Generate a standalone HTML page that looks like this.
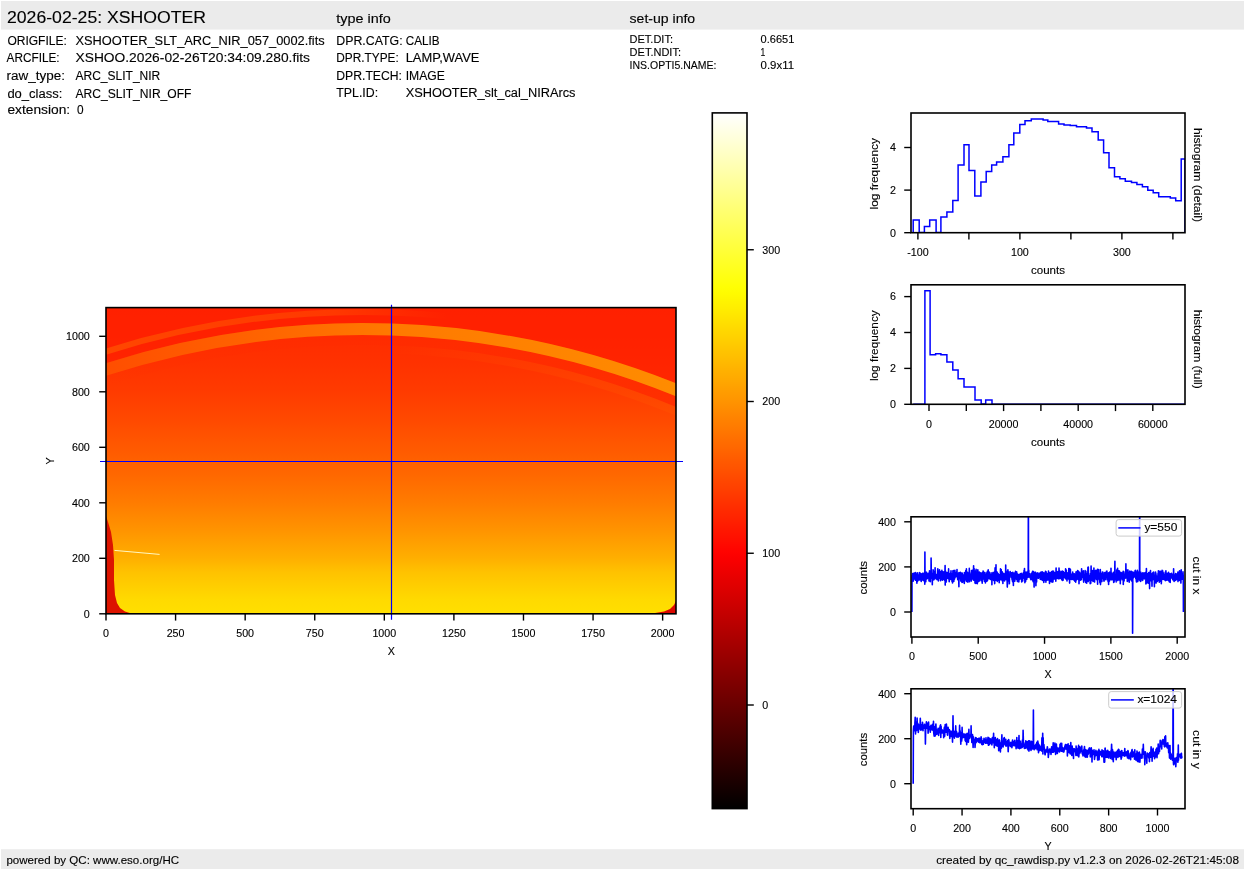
<!DOCTYPE html><html><head><meta charset="utf-8"><style>html,body{margin:0;padding:0;background:#fff;overflow:hidden}svg{display:block;will-change:transform}text{font-family:"Liberation Sans", sans-serif;stroke:#000;stroke-width:0.12px;paint-order:stroke}</style></head><body>
<svg width="1245" height="870" viewBox="0 0 1245 870">
<rect width="1245" height="870" fill="#fff"/>
<rect x="1" y="1" width="1243" height="28.6" fill="#ebebeb"/>
<rect x="1" y="849.2" width="1243" height="19.8" fill="#ebebeb"/>
<text x="7.00" y="23.10" font-size="17.2" text-anchor="start" fill="#000" textLength="199.00" lengthAdjust="spacingAndGlyphs" >2026-02-25: XSHOOTER</text>
<text x="336.30" y="22.80" font-size="12" text-anchor="start" fill="#000" textLength="54.40" lengthAdjust="spacingAndGlyphs" >type info</text>
<text x="629.60" y="22.70" font-size="12" text-anchor="start" fill="#000" textLength="65.60" lengthAdjust="spacingAndGlyphs" >set-up info</text>
<text x="7.40" y="45.00" font-size="12" text-anchor="start" fill="#000" textLength="59.40" lengthAdjust="spacingAndGlyphs" >ORIGFILE:</text>
<text x="75.50" y="45.00" font-size="12" text-anchor="start" fill="#000" textLength="249.20" lengthAdjust="spacingAndGlyphs" >XSHOOTER_SLT_ARC_NIR_057_0002.fits</text>
<text x="6.60" y="61.90" font-size="12" text-anchor="start" fill="#000" textLength="53.00" lengthAdjust="spacingAndGlyphs" >ARCFILE:</text>
<text x="75.50" y="61.90" font-size="12" text-anchor="start" fill="#000" textLength="234.50" lengthAdjust="spacingAndGlyphs" >XSHOO.2026-02-26T20:34:09.280.fits</text>
<text x="6.60" y="80.20" font-size="12" text-anchor="start" fill="#000" textLength="58.40" lengthAdjust="spacingAndGlyphs" >raw_type:</text>
<text x="75.50" y="80.20" font-size="12" text-anchor="start" fill="#000" textLength="84.80" lengthAdjust="spacingAndGlyphs" >ARC_SLIT_NIR</text>
<text x="7.40" y="97.80" font-size="12" text-anchor="start" fill="#000" textLength="54.90" lengthAdjust="spacingAndGlyphs" >do_class:</text>
<text x="75.50" y="97.80" font-size="12" text-anchor="start" fill="#000" textLength="115.90" lengthAdjust="spacingAndGlyphs" >ARC_SLIT_NIR_OFF</text>
<text x="7.40" y="113.60" font-size="12" text-anchor="start" fill="#000" textLength="62.80" lengthAdjust="spacingAndGlyphs" >extension:</text>
<text x="76.90" y="113.60" font-size="12" text-anchor="start" fill="#000" textLength="6.60" lengthAdjust="spacingAndGlyphs" >0</text>
<text x="336.30" y="45.10" font-size="12" text-anchor="start" fill="#000" textLength="66.30" lengthAdjust="spacingAndGlyphs" >DPR.CATG:</text>
<text x="405.70" y="45.10" font-size="12" text-anchor="start" fill="#000" textLength="33.80" lengthAdjust="spacingAndGlyphs" >CALIB</text>
<text x="336.30" y="61.80" font-size="12" text-anchor="start" fill="#000" textLength="62.40" lengthAdjust="spacingAndGlyphs" >DPR.TYPE:</text>
<text x="405.70" y="61.80" font-size="12" text-anchor="start" fill="#000" textLength="73.70" lengthAdjust="spacingAndGlyphs" >LAMP,WAVE</text>
<text x="336.30" y="79.80" font-size="12" text-anchor="start" fill="#000" textLength="65.70" lengthAdjust="spacingAndGlyphs" >DPR.TECH:</text>
<text x="405.70" y="79.80" font-size="12" text-anchor="start" fill="#000" textLength="39.20" lengthAdjust="spacingAndGlyphs" >IMAGE</text>
<text x="336.30" y="97.20" font-size="12" text-anchor="start" fill="#000" textLength="41.80" lengthAdjust="spacingAndGlyphs" >TPL.ID:</text>
<text x="405.70" y="97.20" font-size="12" text-anchor="start" fill="#000" textLength="169.80" lengthAdjust="spacingAndGlyphs" >XSHOOTER_slt_cal_NIRArcs</text>
<text x="629.60" y="43.10" font-size="10.6" text-anchor="start" fill="#000" textLength="43.40" lengthAdjust="spacingAndGlyphs" >DET.DIT:</text>
<text x="760.60" y="43.10" font-size="10.6" text-anchor="start" fill="#000" textLength="33.70" lengthAdjust="spacingAndGlyphs" >0.6651</text>
<text x="629.60" y="55.90" font-size="10.6" text-anchor="start" fill="#000" textLength="51.40" lengthAdjust="spacingAndGlyphs" >DET.NDIT:</text>
<text x="760.60" y="55.90" font-size="10.6" text-anchor="start" fill="#000" textLength="4.80" lengthAdjust="spacingAndGlyphs" >1</text>
<text x="629.60" y="68.80" font-size="10.6" text-anchor="start" fill="#000" textLength="86.80" lengthAdjust="spacingAndGlyphs" >INS.OPTI5.NAME:</text>
<text x="760.60" y="68.80" font-size="10.6" text-anchor="start" fill="#000" textLength="33.40" lengthAdjust="spacingAndGlyphs" >0.9x11</text>
<text x="6.40" y="864.10" font-size="11.2" text-anchor="start" fill="#000" textLength="172.70" lengthAdjust="spacingAndGlyphs" >powered by QC: www.eso.org/HC</text>
<text x="936.20" y="864.10" font-size="11.2" text-anchor="start" fill="#000" textLength="302.80" lengthAdjust="spacingAndGlyphs" >created by qc_rawdisp.py v1.2.3 on 2026-02-26T21:45:08</text>
<defs>
<linearGradient id="bg" x1="0" y1="1" x2="0" y2="0"><stop offset="0.0000" stop-color="#ffe000"/><stop offset="0.0453" stop-color="#ffda00"/><stop offset="0.0906" stop-color="#ffce00"/><stop offset="0.1359" stop-color="#ffc200"/><stop offset="0.1813" stop-color="#ffaf00"/><stop offset="0.2719" stop-color="#ff9400"/><stop offset="0.3625" stop-color="#ff7c00"/><stop offset="0.4531" stop-color="#ff6800"/><stop offset="0.5438" stop-color="#ff5900"/><stop offset="0.6344" stop-color="#ff4900"/><stop offset="0.7250" stop-color="#ff3b00"/><stop offset="0.8156" stop-color="#ff3200"/><stop offset="0.9063" stop-color="#ff2c00"/><stop offset="0.9987" stop-color="#ff2900"/></linearGradient>
<linearGradient id="cbar" x1="0" y1="1" x2="0" y2="0"><stop offset="0.00" stop-color="#000000"/><stop offset="0.01" stop-color="#070000"/><stop offset="0.02" stop-color="#0e0000"/><stop offset="0.03" stop-color="#150000"/><stop offset="0.04" stop-color="#1c0000"/><stop offset="0.05" stop-color="#230000"/><stop offset="0.06" stop-color="#2a0000"/><stop offset="0.07" stop-color="#310000"/><stop offset="0.08" stop-color="#380000"/><stop offset="0.09" stop-color="#3f0000"/><stop offset="0.10" stop-color="#460000"/><stop offset="0.11" stop-color="#4d0000"/><stop offset="0.12" stop-color="#540000"/><stop offset="0.13" stop-color="#5b0000"/><stop offset="0.14" stop-color="#620000"/><stop offset="0.15" stop-color="#690000"/><stop offset="0.16" stop-color="#700000"/><stop offset="0.17" stop-color="#770000"/><stop offset="0.18" stop-color="#7e0000"/><stop offset="0.19" stop-color="#850000"/><stop offset="0.20" stop-color="#8c0000"/><stop offset="0.21" stop-color="#930000"/><stop offset="0.22" stop-color="#9a0000"/><stop offset="0.23" stop-color="#a10000"/><stop offset="0.24" stop-color="#a80000"/><stop offset="0.25" stop-color="#af0000"/><stop offset="0.26" stop-color="#b60000"/><stop offset="0.27" stop-color="#bd0000"/><stop offset="0.28" stop-color="#c40000"/><stop offset="0.29" stop-color="#cb0000"/><stop offset="0.30" stop-color="#d20000"/><stop offset="0.31" stop-color="#d90000"/><stop offset="0.32" stop-color="#e00000"/><stop offset="0.33" stop-color="#e60000"/><stop offset="0.34" stop-color="#ed0000"/><stop offset="0.35" stop-color="#f40000"/><stop offset="0.36" stop-color="#fb0000"/><stop offset="0.37" stop-color="#ff0300"/><stop offset="0.38" stop-color="#ff0a00"/><stop offset="0.39" stop-color="#ff1100"/><stop offset="0.40" stop-color="#ff1700"/><stop offset="0.41" stop-color="#ff1e00"/><stop offset="0.42" stop-color="#ff2500"/><stop offset="0.43" stop-color="#ff2b00"/><stop offset="0.44" stop-color="#ff3200"/><stop offset="0.45" stop-color="#ff3900"/><stop offset="0.46" stop-color="#ff4000"/><stop offset="0.47" stop-color="#ff4600"/><stop offset="0.48" stop-color="#ff4d00"/><stop offset="0.49" stop-color="#ff5400"/><stop offset="0.50" stop-color="#ff5a00"/><stop offset="0.51" stop-color="#ff6100"/><stop offset="0.52" stop-color="#ff6800"/><stop offset="0.53" stop-color="#ff6e00"/><stop offset="0.54" stop-color="#ff7500"/><stop offset="0.55" stop-color="#ff7c00"/><stop offset="0.56" stop-color="#ff8200"/><stop offset="0.57" stop-color="#ff8900"/><stop offset="0.58" stop-color="#ff9000"/><stop offset="0.59" stop-color="#ff9700"/><stop offset="0.60" stop-color="#ff9d00"/><stop offset="0.61" stop-color="#ffa400"/><stop offset="0.62" stop-color="#ffab00"/><stop offset="0.63" stop-color="#ffb100"/><stop offset="0.64" stop-color="#ffb800"/><stop offset="0.65" stop-color="#ffbf00"/><stop offset="0.66" stop-color="#ffc500"/><stop offset="0.67" stop-color="#ffcc00"/><stop offset="0.68" stop-color="#ffd300"/><stop offset="0.69" stop-color="#ffd900"/><stop offset="0.70" stop-color="#ffe000"/><stop offset="0.71" stop-color="#ffe700"/><stop offset="0.72" stop-color="#ffee00"/><stop offset="0.73" stop-color="#fff400"/><stop offset="0.74" stop-color="#fffb00"/><stop offset="0.75" stop-color="#ffff04"/><stop offset="0.76" stop-color="#ffff0e"/><stop offset="0.77" stop-color="#ffff18"/><stop offset="0.78" stop-color="#ffff22"/><stop offset="0.79" stop-color="#ffff2c"/><stop offset="0.80" stop-color="#ffff36"/><stop offset="0.81" stop-color="#ffff40"/><stop offset="0.82" stop-color="#ffff4a"/><stop offset="0.83" stop-color="#ffff54"/><stop offset="0.84" stop-color="#ffff5e"/><stop offset="0.85" stop-color="#ffff68"/><stop offset="0.86" stop-color="#ffff72"/><stop offset="0.87" stop-color="#ffff7c"/><stop offset="0.88" stop-color="#ffff87"/><stop offset="0.89" stop-color="#ffff91"/><stop offset="0.90" stop-color="#ffff9b"/><stop offset="0.91" stop-color="#ffffa5"/><stop offset="0.92" stop-color="#ffffaf"/><stop offset="0.93" stop-color="#ffffb9"/><stop offset="0.94" stop-color="#ffffc3"/><stop offset="0.95" stop-color="#ffffcd"/><stop offset="0.96" stop-color="#ffffd7"/><stop offset="0.97" stop-color="#ffffe1"/><stop offset="0.98" stop-color="#ffffeb"/><stop offset="0.99" stop-color="#fffff5"/><stop offset="1.00" stop-color="#ffffff"/></linearGradient>
<clipPath id="imclip"><rect x="106.0" y="307.6" width="570.0" height="306.19999999999993"/></clipPath>
</defs>
<rect x="106.0" y="307.6" width="570.0" height="306.19999999999993" fill="url(#bg)"/>
<g clip-path="url(#imclip)">
<linearGradient id="upg" gradientUnits="userSpaceOnUse" x1="106" y1="0" x2="676" y2="0"><stop offset="0" stop-color="#ff4b00" stop-opacity="0.9"/><stop offset="0.4" stop-color="#ff4300" stop-opacity="0.7"/><stop offset="0.6" stop-color="#ff3c00" stop-opacity="0"/></linearGradient>
<linearGradient id="dkg" gradientUnits="userSpaceOnUse" x1="106" y1="0" x2="676" y2="0"><stop offset="0" stop-color="#ff1300" stop-opacity="0.8"/><stop offset="0.4" stop-color="#ff1800" stop-opacity="0.6"/><stop offset="1" stop-color="#ff1c00" stop-opacity="0.5"/></linearGradient>
<path d="M80,300 L700,300 L700,393.25 A843.5,843.5 0 0 0 80,371.89 Z" fill="#ff1900" fill-opacity="0.55"/>
<path d="M80,360.22 A854.5,854.5 0 0 1 700,381.26" fill="none" stroke="url(#upg)" stroke-width="6"/>
<linearGradient id="arcg" gradientUnits="userSpaceOnUse" x1="106" y1="0" x2="676" y2="0"><stop offset="0" stop-color="#ff4e00"/><stop offset="0.25" stop-color="#ff6200"/><stop offset="0.5" stop-color="#ff7900"/><stop offset="1" stop-color="#ff8c00"/></linearGradient>
<linearGradient id="lowg" gradientUnits="userSpaceOnUse" x1="106" y1="0" x2="676" y2="0"><stop offset="0" stop-color="#ff2b00" stop-opacity="0"/><stop offset="0.4" stop-color="#ff2b00" stop-opacity="0.5"/><stop offset="1" stop-color="#ff2800" stop-opacity="0.7"/></linearGradient>
<linearGradient id="low2g" gradientUnits="userSpaceOnUse" x1="106" y1="0" x2="676" y2="0"><stop offset="0" stop-color="#ff5900" stop-opacity="0"/><stop offset="0.5" stop-color="#ff5900" stop-opacity="0"/><stop offset="0.8" stop-color="#ff5300" stop-opacity="0.3"/><stop offset="1" stop-color="#ff5300" stop-opacity="0.4"/></linearGradient>
<path d="M80,389.96 A826.5,826.5 0 0 1 700,411.83" fill="none" stroke="url(#lowg)" stroke-width="10"/>
<path d="M80,399.55 A817.5,817.5 0 0 1 700,421.69" fill="none" stroke="url(#low2g)" stroke-width="8"/>
<path d="M80,378.37 A837.4,837.4 0 0 1 700,399.90" fill="none" stroke="url(#arcg)" stroke-width="12"/>
<path d="M106,516 L108,522 L111,532 L113,545 L114,560 L114,580 L115,595 L117,603 L120,608 L125,611.5 L133,614 L106,614 Z" fill="#dc1400"/>
<path d="M640,614 L655,613 L664,611.5 L670,609 L674,605 L676,601 L676,614 Z" fill="#dc0800"/>
<line x1="114.5" y1="550.4" x2="159.6" y2="554.4" stroke="#fff8c0" stroke-width="1"/>
</g>
<line x1="391.5" y1="304.8" x2="391.5" y2="619.8" stroke="#0000ff" stroke-width="1.2"/>
<line x1="100" y1="461.5" x2="683" y2="461.5" stroke="#0000ff" stroke-width="1.2"/>
<rect x="106.0" y="307.6" width="570.0" height="306.19999999999993" fill="none" stroke="#000" stroke-width="1.6"/>
<line x1="106.00" y1="613.8" x2="106.00" y2="620.5999999999999" stroke="#000" stroke-width="1.4"/>
<text x="106.00" y="637.20" font-size="10.7" text-anchor="middle" fill="#000" >0</text>
<line x1="175.58" y1="613.8" x2="175.58" y2="620.5999999999999" stroke="#000" stroke-width="1.4"/>
<text x="175.58" y="637.20" font-size="10.7" text-anchor="middle" fill="#000" >250</text>
<line x1="245.16" y1="613.8" x2="245.16" y2="620.5999999999999" stroke="#000" stroke-width="1.4"/>
<text x="245.16" y="637.20" font-size="10.7" text-anchor="middle" fill="#000" >500</text>
<line x1="314.74" y1="613.8" x2="314.74" y2="620.5999999999999" stroke="#000" stroke-width="1.4"/>
<text x="314.74" y="637.20" font-size="10.7" text-anchor="middle" fill="#000" >750</text>
<line x1="384.32" y1="613.8" x2="384.32" y2="620.5999999999999" stroke="#000" stroke-width="1.4"/>
<text x="384.32" y="637.20" font-size="10.7" text-anchor="middle" fill="#000" >1000</text>
<line x1="453.90" y1="613.8" x2="453.90" y2="620.5999999999999" stroke="#000" stroke-width="1.4"/>
<text x="453.90" y="637.20" font-size="10.7" text-anchor="middle" fill="#000" >1250</text>
<line x1="523.48" y1="613.8" x2="523.48" y2="620.5999999999999" stroke="#000" stroke-width="1.4"/>
<text x="523.48" y="637.20" font-size="10.7" text-anchor="middle" fill="#000" >1500</text>
<line x1="593.06" y1="613.8" x2="593.06" y2="620.5999999999999" stroke="#000" stroke-width="1.4"/>
<text x="593.06" y="637.20" font-size="10.7" text-anchor="middle" fill="#000" >1750</text>
<line x1="662.64" y1="613.8" x2="662.64" y2="620.5999999999999" stroke="#000" stroke-width="1.4"/>
<text x="662.64" y="637.20" font-size="10.7" text-anchor="middle" fill="#000" >2000</text>
<line x1="99.2" y1="613.80" x2="106.0" y2="613.80" stroke="#000" stroke-width="1.4"/>
<text x="89.80" y="617.65" font-size="10.7" text-anchor="end" fill="#000" >0</text>
<line x1="99.2" y1="558.30" x2="106.0" y2="558.30" stroke="#000" stroke-width="1.4"/>
<text x="89.80" y="562.15" font-size="10.7" text-anchor="end" fill="#000" >200</text>
<line x1="99.2" y1="502.80" x2="106.0" y2="502.80" stroke="#000" stroke-width="1.4"/>
<text x="89.80" y="506.65" font-size="10.7" text-anchor="end" fill="#000" >400</text>
<line x1="99.2" y1="447.30" x2="106.0" y2="447.30" stroke="#000" stroke-width="1.4"/>
<text x="89.80" y="451.15" font-size="10.7" text-anchor="end" fill="#000" >600</text>
<line x1="99.2" y1="391.80" x2="106.0" y2="391.80" stroke="#000" stroke-width="1.4"/>
<text x="89.80" y="395.65" font-size="10.7" text-anchor="end" fill="#000" >800</text>
<line x1="99.2" y1="336.30" x2="106.0" y2="336.30" stroke="#000" stroke-width="1.4"/>
<text x="89.80" y="340.15" font-size="10.7" text-anchor="end" fill="#000" >1000</text>
<text x="391.30" y="654.90" font-size="10.7" text-anchor="middle" fill="#000" >X</text>
<text x="53.80" y="461.00" font-size="10.7" text-anchor="middle" fill="#000" transform="rotate(-90 53.80 461.00)" >Y</text>
<rect x="712.3" y="112.9" width="34.700000000000045" height="695.7" fill="url(#cbar)"/>
<rect x="712.3" y="112.9" width="34.700000000000045" height="695.7" fill="none" stroke="#000" stroke-width="1.6"/>
<line x1="747.0" y1="705.00" x2="753.8" y2="705.00" stroke="#000" stroke-width="1.4"/>
<text x="762.30" y="708.85" font-size="10.7" text-anchor="start" fill="#000" >0</text>
<line x1="747.0" y1="553.25" x2="753.8" y2="553.25" stroke="#000" stroke-width="1.4"/>
<text x="762.30" y="557.10" font-size="10.7" text-anchor="start" fill="#000" >100</text>
<line x1="747.0" y1="401.50" x2="753.8" y2="401.50" stroke="#000" stroke-width="1.4"/>
<text x="762.30" y="405.35" font-size="10.7" text-anchor="start" fill="#000" >200</text>
<line x1="747.0" y1="249.75" x2="753.8" y2="249.75" stroke="#000" stroke-width="1.4"/>
<text x="762.30" y="253.60" font-size="10.7" text-anchor="start" fill="#000" >300</text>
<g clip-path="url(#h1clip)"><path d="M913.2,232.7 L913.2,219.9 L919.2,219.9 L919.2,232.6 L924.4,232.6 L924.4,226.6 L929.7,226.6 L929.7,219.9 L936.1,219.9 L936.1,232.6 L940.9,232.6 L940.9,216.9 L946.9,216.9 L946.9,212.1 L952.8,212.1 L952.8,200.4 L958.1,200.4 L958.1,165.0 L964.0,165.0 L964.0,144.8 L969.0,144.8 L969.0,170.5 L974.8,170.5 L974.8,195.9 L980.9,195.9 L980.9,182.0 L986.2,182.0 L986.2,171.6 L991.7,171.6 L991.7,165.0 L996.6,165.0 L996.6,162.0 L1002.9,162.0 L1002.9,156.8 L1008.9,156.8 L1008.9,144.8 L1013.8,144.8 L1013.8,132.9 L1019.8,132.9 L1019.8,124.6 L1025.0,124.6 L1025.0,120.8 L1031.3,120.8 L1031.3,119.0 L1040.0,119.0 L1040.0,119.0 L1043.1,119.0 L1043.1,120.0 L1047.8,120.0 L1047.8,121.6 L1058.6,121.6 L1058.6,123.9 L1064.0,123.9 L1064.0,124.9 L1070.2,124.9 L1070.2,125.6 L1076.5,125.6 L1076.5,126.7 L1086.5,126.7 L1086.5,128.0 L1092.0,128.0 L1092.0,131.7 L1098.2,131.7 L1098.2,139.9 L1103.6,139.9 L1103.6,152.8 L1109.0,152.8 L1109.0,167.8 L1114.5,167.8 L1114.5,176.7 L1119.9,176.7 L1119.9,178.8 L1125.3,178.8 L1125.3,181.3 L1131.5,181.3 L1131.5,182.6 L1136.9,182.6 L1136.9,184.6 L1142.4,184.6 L1142.4,186.7 L1147.8,186.7 L1147.8,190.3 L1153.2,190.3 L1153.2,192.8 L1158.7,192.8 L1158.7,196.8 L1170.3,196.8 L1170.3,198.1 L1175.7,198.1 L1175.7,200.7 L1181.2,200.7 L1181.2,159.0 L1185.0,159.0 L1185.0,232.7" fill="none" stroke="#0000ff" stroke-width="1.5" stroke-linejoin="miter"/></g>
<clipPath id="h1clip"><rect x="911.0" y="113.0" width="274.0" height="119.69999999999999"/></clipPath>
<rect x="911.0" y="113.0" width="274.0" height="119.69999999999999" fill="none" stroke="#000" stroke-width="1.6"/>
<line x1="917.90" y1="232.7" x2="917.90" y2="239.5" stroke="#000" stroke-width="1.4"/>
<text x="917.90" y="255.80" font-size="10.7" text-anchor="middle" fill="#000" >-100</text>
<line x1="968.90" y1="232.7" x2="968.90" y2="239.5" stroke="#000" stroke-width="1.4"/>
<line x1="1019.90" y1="232.7" x2="1019.90" y2="239.5" stroke="#000" stroke-width="1.4"/>
<text x="1019.90" y="255.80" font-size="10.7" text-anchor="middle" fill="#000" >100</text>
<line x1="1070.90" y1="232.7" x2="1070.90" y2="239.5" stroke="#000" stroke-width="1.4"/>
<line x1="1121.90" y1="232.7" x2="1121.90" y2="239.5" stroke="#000" stroke-width="1.4"/>
<text x="1121.90" y="255.80" font-size="10.7" text-anchor="middle" fill="#000" >300</text>
<line x1="1172.90" y1="232.7" x2="1172.90" y2="239.5" stroke="#000" stroke-width="1.4"/>
<line x1="904.2" y1="232.70" x2="911.0" y2="232.70" stroke="#000" stroke-width="1.4"/>
<text x="896.00" y="236.55" font-size="10.7" text-anchor="end" fill="#000" >0</text>
<line x1="904.2" y1="190.10" x2="911.0" y2="190.10" stroke="#000" stroke-width="1.4"/>
<text x="896.00" y="193.95" font-size="10.7" text-anchor="end" fill="#000" >2</text>
<line x1="904.2" y1="147.50" x2="911.0" y2="147.50" stroke="#000" stroke-width="1.4"/>
<text x="896.00" y="151.35" font-size="10.7" text-anchor="end" fill="#000" >4</text>
<text x="1048.00" y="274.20" font-size="10.7" text-anchor="middle" fill="#000" textLength="34.00" lengthAdjust="spacingAndGlyphs" >counts</text>
<text x="877.80" y="173.75" font-size="10.7" text-anchor="middle" fill="#000" textLength="71.50" lengthAdjust="spacingAndGlyphs" transform="rotate(-90 877.80 173.75)" >log frequency</text>
<text x="1193.80" y="175.00" font-size="10.7" text-anchor="middle" fill="#000" textLength="94.20" lengthAdjust="spacingAndGlyphs" transform="rotate(90 1193.80 175.00)" >histogram (detail)</text>
<path d="M913.2,404.3 L924.9,404.3 L924.9,290.8 L930.1,290.8 L930.1,354.7 L935.6,354.7 L935.6,353.7 L940.9,353.7 L940.9,354.7 L946.9,354.7 L946.9,361.9 L952.8,361.9 L952.8,370.0 L958.1,370.0 L958.1,378.7 L964.0,378.7 L964.0,386.9 L975.0,386.9 L975.0,399.9 L981.2,399.9 L981.2,404.1 L985.7,404.1 L985.7,399.9 L992.0,399.9 L992.0,404.3 L1184.7,404.3" fill="none" stroke="#0000ff" stroke-width="1.5"/>
<rect x="911.0" y="284.8" width="274.0" height="119.5" fill="none" stroke="#000" stroke-width="1.6"/>
<line x1="929.00" y1="404.3" x2="929.00" y2="411.1" stroke="#000" stroke-width="1.4"/>
<text x="929.00" y="427.50" font-size="10.7" text-anchor="middle" fill="#000" >0</text>
<line x1="966.30" y1="404.3" x2="966.30" y2="411.1" stroke="#000" stroke-width="1.4"/>
<line x1="1003.60" y1="404.3" x2="1003.60" y2="411.1" stroke="#000" stroke-width="1.4"/>
<text x="1003.60" y="427.50" font-size="10.7" text-anchor="middle" fill="#000" >20000</text>
<line x1="1040.90" y1="404.3" x2="1040.90" y2="411.1" stroke="#000" stroke-width="1.4"/>
<line x1="1078.20" y1="404.3" x2="1078.20" y2="411.1" stroke="#000" stroke-width="1.4"/>
<text x="1078.20" y="427.50" font-size="10.7" text-anchor="middle" fill="#000" >40000</text>
<line x1="1115.50" y1="404.3" x2="1115.50" y2="411.1" stroke="#000" stroke-width="1.4"/>
<line x1="1152.80" y1="404.3" x2="1152.80" y2="411.1" stroke="#000" stroke-width="1.4"/>
<text x="1152.80" y="427.50" font-size="10.7" text-anchor="middle" fill="#000" >60000</text>
<line x1="904.2" y1="404.30" x2="911.0" y2="404.30" stroke="#000" stroke-width="1.4"/>
<text x="896.00" y="408.15" font-size="10.7" text-anchor="end" fill="#000" >0</text>
<line x1="904.2" y1="368.40" x2="911.0" y2="368.40" stroke="#000" stroke-width="1.4"/>
<text x="896.00" y="372.25" font-size="10.7" text-anchor="end" fill="#000" >2</text>
<line x1="904.2" y1="332.50" x2="911.0" y2="332.50" stroke="#000" stroke-width="1.4"/>
<text x="896.00" y="336.35" font-size="10.7" text-anchor="end" fill="#000" >4</text>
<line x1="904.2" y1="296.60" x2="911.0" y2="296.60" stroke="#000" stroke-width="1.4"/>
<text x="896.00" y="300.45" font-size="10.7" text-anchor="end" fill="#000" >6</text>
<text x="1048.00" y="446.00" font-size="10.7" text-anchor="middle" fill="#000" textLength="34.00" lengthAdjust="spacingAndGlyphs" >counts</text>
<text x="877.80" y="345.70" font-size="10.7" text-anchor="middle" fill="#000" textLength="70.80" lengthAdjust="spacingAndGlyphs" transform="rotate(-90 877.80 345.70)" >log frequency</text>
<text x="1193.80" y="349.20" font-size="10.7" text-anchor="middle" fill="#000" textLength="79.10" lengthAdjust="spacingAndGlyphs" transform="rotate(90 1193.80 349.20)" >histogram (full)</text>
<clipPath id="c1clip"><rect x="911.0" y="516.8" width="274.0" height="120.20000000000005"/></clipPath>
<g clip-path="url(#c1clip)"><path d="M911.9,612.0 L912.0,577.1 L912.2,575.0 L912.3,578.9 L912.4,576.9 L912.6,573.6 L912.7,575.7 L912.8,580.9 L913.0,574.1 L913.1,580.9 L913.2,581.1 L913.4,575.5 L913.5,576.5 L913.6,575.5 L913.8,575.3 L913.9,574.9 L914.0,573.1 L914.2,577.3 L914.3,576.7 L914.4,577.6 L914.6,579.0 L914.7,578.6 L914.8,575.7 L915.0,576.2 L915.1,572.8 L915.2,576.7 L915.3,578.6 L915.5,580.3 L915.6,574.1 L915.7,572.5 L915.9,575.4 L916.0,574.7 L916.1,578.0 L916.3,579.0 L916.4,577.8 L916.5,580.3 L916.7,575.7 L916.8,581.5 L916.9,583.2 L917.1,574.7 L917.2,573.7 L917.3,578.3 L917.5,576.3 L917.6,581.2 L917.7,572.8 L917.9,578.2 L918.0,575.1 L918.1,580.4 L918.3,577.7 L918.4,577.8 L918.5,575.0 L918.7,576.6 L918.8,576.7 L918.9,576.7 L919.1,574.9 L919.2,577.0 L919.3,575.1 L919.5,578.9 L919.6,580.0 L919.7,572.5 L919.9,577.6 L920.0,578.8 L920.1,574.5 L920.3,573.5 L920.4,576.7 L920.5,573.6 L920.7,574.3 L920.8,577.2 L920.9,577.0 L921.1,580.9 L921.2,581.4 L921.3,574.0 L921.5,574.3 L921.6,576.9 L921.7,575.0 L921.8,580.5 L922.0,575.8 L922.1,573.9 L922.2,577.1 L922.4,576.3 L922.5,578.6 L922.6,574.5 L922.8,579.1 L922.9,575.8 L923.0,573.0 L923.2,580.0 L923.3,579.5 L923.4,576.2 L923.6,573.6 L923.7,580.8 L923.8,576.2 L924.0,578.1 L924.1,576.1 L924.2,574.8 L924.4,580.4 L924.5,575.3 L924.6,575.8 L924.8,584.2 L924.9,552.0 L925.0,572.9 L925.2,574.4 L925.3,576.4 L925.4,579.5 L925.6,578.8 L925.7,572.1 L925.8,581.7 L926.0,572.6 L926.1,575.3 L926.2,575.3 L926.4,573.3 L926.5,572.3 L926.6,578.4 L926.8,579.0 L926.9,573.7 L927.0,577.5 L927.2,575.9 L927.3,574.4 L927.4,578.2 L927.6,577.5 L927.7,574.2 L927.8,577.7 L928.0,574.0 L928.1,578.0 L928.2,573.2 L928.3,577.0 L928.5,576.1 L928.6,577.9 L928.7,575.7 L928.9,575.7 L929.0,581.0 L929.1,575.9 L929.3,576.1 L929.4,575.6 L929.5,570.7 L929.7,575.4 L929.8,572.7 L929.9,577.0 L930.1,581.3 L930.2,576.6 L930.3,581.8 L930.5,577.2 L930.6,574.9 L930.7,577.5 L930.9,578.2 L931.0,574.9 L931.1,558.1 L931.3,574.1 L931.4,572.8 L931.5,577.8 L931.7,574.4 L931.8,574.1 L931.9,575.2 L932.1,577.4 L932.2,578.7 L932.3,584.7 L932.5,577.1 L932.6,575.4 L932.7,580.4 L932.9,575.3 L933.0,578.3 L933.1,569.8 L933.3,575.6 L933.4,570.9 L933.5,574.9 L933.7,577.3 L933.8,574.0 L933.9,579.7 L934.1,579.5 L934.2,577.1 L934.3,577.3 L934.5,571.6 L934.6,576.4 L934.7,575.9 L934.8,577.9 L935.0,577.6 L935.1,567.7 L935.2,575.7 L935.4,577.0 L935.5,576.9 L935.6,574.3 L935.8,576.8 L935.9,578.7 L936.0,578.8 L936.2,577.4 L936.3,578.3 L936.4,575.9 L936.6,576.3 L936.7,578.4 L936.8,576.6 L937.0,578.7 L937.1,579.6 L937.2,574.1 L937.4,576.8 L937.5,574.6 L937.6,571.1 L937.8,568.7 L937.9,571.8 L938.0,572.6 L938.2,575.0 L938.3,572.8 L938.4,581.0 L938.6,578.4 L938.7,575.7 L938.8,578.3 L939.0,577.0 L939.1,576.4 L939.2,576.3 L939.4,578.2 L939.5,569.9 L939.6,574.1 L939.8,573.5 L939.9,577.2 L940.0,577.2 L940.2,573.2 L940.3,571.6 L940.4,576.0 L940.6,580.7 L940.7,577.5 L940.8,577.4 L941.0,579.2 L941.1,576.6 L941.2,572.6 L941.3,578.8 L941.5,572.3 L941.6,576.0 L941.7,572.6 L941.9,570.4 L942.0,578.5 L942.1,579.6 L942.3,571.5 L942.4,576.3 L942.5,580.2 L942.7,577.2 L942.8,576.4 L942.9,575.3 L943.1,575.1 L943.2,572.1 L943.3,578.7 L943.5,574.3 L943.6,579.3 L943.7,579.0 L943.9,576.5 L944.0,571.9 L944.1,575.4 L944.3,576.3 L944.4,577.8 L944.5,580.2 L944.7,579.3 L944.8,575.7 L944.9,574.0 L945.1,565.6 L945.2,585.1 L945.3,576.7 L945.5,571.0 L945.6,579.5 L945.7,576.4 L945.9,578.5 L946.0,577.9 L946.1,578.0 L946.3,581.9 L946.4,576.3 L946.5,572.5 L946.7,577.6 L946.8,578.6 L946.9,575.0 L947.1,577.5 L947.2,574.2 L947.3,576.2 L947.5,576.0 L947.6,573.9 L947.7,575.3 L947.8,572.3 L948.0,578.4 L948.1,572.6 L948.2,575.1 L948.4,573.5 L948.5,576.9 L948.6,568.9 L948.8,579.2 L948.9,575.4 L949.0,577.7 L949.2,581.8 L949.3,578.1 L949.4,576.8 L949.6,574.3 L949.7,578.0 L949.8,575.3 L950.0,573.5 L950.1,573.7 L950.2,575.1 L950.4,579.5 L950.5,576.2 L950.6,579.2 L950.8,574.8 L950.9,573.3 L951.0,570.9 L951.2,578.1 L951.3,575.8 L951.4,574.3 L951.6,578.7 L951.7,577.5 L951.8,575.1 L952.0,581.5 L952.1,579.3 L952.2,573.8 L952.4,573.6 L952.5,582.9 L952.6,576.0 L952.8,581.2 L952.9,570.8 L953.0,573.6 L953.2,579.3 L953.3,575.8 L953.4,572.2 L953.6,570.5 L953.7,578.0 L953.8,581.4 L954.0,576.3 L954.1,576.5 L954.2,572.2 L954.3,575.4 L954.5,579.2 L954.6,576.9 L954.7,578.4 L954.9,570.2 L955.0,576.3 L955.1,576.5 L955.3,576.8 L955.4,574.0 L955.5,573.6 L955.7,576.9 L955.8,573.2 L955.9,575.9 L956.1,576.6 L956.2,572.4 L956.3,574.0 L956.5,575.8 L956.6,574.8 L956.7,571.8 L956.9,574.4 L957.0,569.5 L957.1,576.1 L957.3,574.5 L957.4,573.3 L957.5,577.3 L957.7,579.8 L957.8,574.4 L957.9,577.8 L958.1,575.2 L958.2,575.5 L958.3,576.1 L958.5,573.1 L958.6,579.3 L958.7,577.2 L958.9,586.7 L959.0,572.5 L959.1,575.6 L959.3,573.5 L959.4,574.9 L959.5,573.8 L959.7,578.7 L959.8,576.1 L959.9,578.7 L960.1,576.9 L960.2,578.1 L960.3,578.3 L960.4,572.4 L960.6,576.3 L960.7,572.6 L960.8,581.1 L961.0,575.3 L961.1,573.0 L961.2,575.0 L961.4,575.6 L961.5,576.6 L961.6,574.4 L961.8,577.4 L961.9,574.1 L962.0,582.5 L962.2,573.0 L962.3,573.7 L962.4,574.9 L962.6,582.2 L962.7,576.7 L962.8,576.4 L963.0,576.9 L963.1,577.8 L963.2,581.0 L963.4,575.2 L963.5,577.6 L963.6,575.4 L963.8,579.7 L963.9,576.0 L964.0,575.5 L964.2,575.7 L964.3,583.5 L964.4,572.5 L964.6,574.4 L964.7,574.1 L964.8,580.9 L965.0,577.5 L965.1,577.0 L965.2,574.3 L965.4,576.6 L965.5,573.5 L965.6,577.5 L965.8,570.6 L965.9,576.4 L966.0,574.3 L966.2,579.1 L966.3,574.6 L966.4,568.9 L966.6,581.4 L966.7,580.5 L966.8,579.4 L966.9,578.1 L967.1,576.5 L967.2,576.5 L967.3,576.6 L967.5,576.8 L967.6,572.2 L967.7,577.0 L967.9,582.3 L968.0,578.6 L968.1,575.0 L968.3,573.3 L968.4,575.7 L968.5,575.2 L968.7,580.2 L968.8,577.9 L968.9,578.6 L969.1,577.8 L969.2,578.8 L969.3,568.4 L969.5,578.2 L969.6,581.7 L969.7,572.7 L969.9,575.5 L970.0,575.6 L970.1,576.2 L970.3,577.8 L970.4,575.4 L970.5,578.9 L970.7,576.5 L970.8,578.0 L970.9,575.9 L971.1,575.5 L971.2,575.1 L971.3,581.1 L971.5,570.6 L971.6,574.8 L971.7,577.1 L971.9,577.2 L972.0,573.4 L972.1,578.8 L972.3,577.7 L972.4,577.6 L972.5,570.2 L972.7,574.7 L972.8,572.1 L972.9,570.6 L973.1,572.5 L973.2,579.8 L973.3,577.6 L973.4,574.0 L973.6,565.8 L973.7,580.2 L973.8,578.4 L974.0,574.7 L974.1,568.5 L974.2,576.2 L974.4,580.0 L974.5,579.8 L974.6,577.2 L974.8,575.8 L974.9,575.3 L975.0,583.1 L975.2,576.9 L975.3,581.0 L975.4,579.0 L975.6,576.4 L975.7,570.8 L975.8,583.4 L976.0,573.7 L976.1,569.2 L976.2,575.0 L976.4,577.2 L976.5,574.1 L976.6,575.4 L976.8,574.6 L976.9,577.7 L977.0,582.5 L977.2,576.5 L977.3,583.7 L977.4,576.5 L977.6,576.8 L977.7,574.0 L977.8,569.7 L978.0,571.8 L978.1,580.5 L978.2,576.9 L978.4,581.6 L978.5,577.6 L978.6,578.2 L978.8,574.5 L978.9,574.7 L979.0,575.4 L979.2,577.3 L979.3,573.2 L979.4,572.1 L979.6,580.9 L979.7,576.4 L979.8,578.3 L979.9,574.4 L980.1,575.1 L980.2,576.2 L980.3,576.3 L980.5,577.6 L980.6,574.9 L980.7,575.3 L980.9,572.7 L981.0,574.5 L981.1,577.2 L981.3,579.9 L981.4,580.6 L981.5,576.4 L981.7,576.0 L981.8,578.7 L981.9,573.2 L982.1,576.6 L982.2,583.3 L982.3,576.3 L982.5,579.4 L982.6,575.2 L982.7,572.9 L982.9,575.7 L983.0,577.9 L983.1,571.0 L983.3,574.7 L983.4,571.2 L983.5,576.2 L983.7,576.5 L983.8,579.3 L983.9,576.3 L984.1,575.6 L984.2,578.1 L984.3,581.3 L984.5,579.1 L984.6,577.3 L984.7,576.7 L984.9,572.5 L985.0,576.0 L985.1,576.7 L985.3,576.6 L985.4,582.9 L985.5,574.6 L985.7,578.0 L985.8,579.2 L985.9,579.4 L986.1,581.5 L986.2,575.4 L986.3,580.4 L986.4,574.7 L986.6,575.5 L986.7,572.7 L986.8,576.0 L987.0,575.9 L987.1,581.1 L987.2,575.1 L987.4,571.2 L987.5,576.1 L987.6,580.3 L987.8,577.2 L987.9,577.0 L988.0,579.0 L988.2,569.9 L988.3,575.0 L988.4,572.5 L988.6,574.0 L988.7,573.1 L988.8,572.8 L989.0,577.5 L989.1,574.6 L989.2,572.0 L989.4,575.0 L989.5,578.8 L989.6,578.2 L989.8,576.2 L989.9,577.0 L990.0,577.2 L990.2,576.2 L990.3,574.7 L990.4,579.5 L990.6,578.6 L990.7,576.7 L990.8,577.1 L991.0,575.4 L991.1,572.8 L991.2,577.1 L991.4,577.8 L991.5,577.1 L991.6,576.2 L991.8,574.8 L991.9,584.7 L992.0,575.9 L992.2,576.9 L992.3,575.3 L992.4,576.5 L992.6,579.2 L992.7,577.3 L992.8,573.7 L992.9,572.6 L993.1,576.8 L993.2,579.8 L993.3,573.3 L993.5,574.4 L993.6,578.6 L993.7,580.4 L993.9,575.4 L994.0,578.3 L994.1,573.0 L994.3,576.9 L994.4,571.9 L994.5,577.6 L994.7,583.6 L994.8,577.5 L994.9,574.8 L995.1,567.9 L995.2,578.8 L995.3,575.9 L995.5,574.9 L995.6,577.0 L995.7,574.3 L995.9,577.5 L996.0,564.8 L996.1,580.2 L996.3,576.4 L996.4,578.6 L996.5,578.0 L996.7,579.6 L996.8,574.9 L996.9,575.8 L997.1,572.1 L997.2,578.0 L997.3,581.4 L997.5,578.6 L997.6,575.7 L997.7,580.5 L997.9,574.1 L998.0,576.4 L998.1,573.5 L998.3,579.8 L998.4,574.2 L998.5,579.0 L998.7,580.2 L998.8,575.6 L998.9,576.5 L999.1,575.1 L999.2,582.7 L999.3,579.4 L999.4,577.9 L999.6,579.6 L999.7,580.3 L999.8,574.6 L1000.0,577.0 L1000.1,576.3 L1000.2,577.7 L1000.4,574.3 L1000.5,568.7 L1000.6,579.2 L1000.8,579.3 L1000.9,577.3 L1001.0,573.8 L1001.2,569.5 L1001.3,576.6 L1001.4,575.4 L1001.6,576.8 L1001.7,579.1 L1001.8,579.7 L1002.0,578.9 L1002.1,580.8 L1002.2,571.8 L1002.4,576.5 L1002.5,581.0 L1002.6,575.5 L1002.8,579.3 L1002.9,583.5 L1003.0,574.7 L1003.2,580.9 L1003.3,577.7 L1003.4,573.6 L1003.6,575.1 L1003.7,577.3 L1003.8,573.4 L1004.0,574.6 L1004.1,578.8 L1004.2,576.8 L1004.4,576.1 L1004.5,575.4 L1004.6,581.0 L1004.8,578.9 L1004.9,576.0 L1005.0,578.2 L1005.2,579.6 L1005.3,579.0 L1005.4,573.6 L1005.6,578.3 L1005.7,565.1 L1005.8,576.3 L1005.9,577.0 L1006.1,577.6 L1006.2,574.9 L1006.3,579.1 L1006.5,572.9 L1006.6,578.7 L1006.7,579.9 L1006.9,579.0 L1007.0,577.4 L1007.1,579.4 L1007.3,587.1 L1007.4,571.0 L1007.5,584.9 L1007.7,573.4 L1007.8,580.1 L1007.9,569.7 L1008.1,575.8 L1008.2,576.8 L1008.3,579.2 L1008.5,571.8 L1008.6,581.0 L1008.7,577.1 L1008.9,579.4 L1009.0,574.8 L1009.1,575.1 L1009.3,578.8 L1009.4,583.7 L1009.5,576.7 L1009.7,577.5 L1009.8,574.3 L1009.9,574.0 L1010.1,576.1 L1010.2,571.6 L1010.3,574.9 L1010.5,573.4 L1010.6,575.2 L1010.7,573.9 L1010.9,573.1 L1011.0,575.7 L1011.1,576.0 L1011.3,574.5 L1011.4,572.8 L1011.5,577.7 L1011.7,572.7 L1011.8,576.5 L1011.9,574.1 L1012.1,579.9 L1012.2,574.7 L1012.3,577.1 L1012.4,576.7 L1012.6,581.8 L1012.7,573.5 L1012.8,572.4 L1013.0,576.5 L1013.1,577.4 L1013.2,576.7 L1013.4,585.5 L1013.5,578.4 L1013.6,576.1 L1013.8,575.0 L1013.9,579.1 L1014.0,577.6 L1014.2,579.4 L1014.3,573.0 L1014.4,576.2 L1014.6,578.6 L1014.7,579.1 L1014.8,581.3 L1015.0,575.4 L1015.1,576.2 L1015.2,578.3 L1015.4,578.2 L1015.5,571.4 L1015.6,577.7 L1015.8,572.2 L1015.9,577.8 L1016.0,575.1 L1016.2,576.7 L1016.3,575.4 L1016.4,579.3 L1016.6,577.0 L1016.7,571.9 L1016.8,579.2 L1017.0,579.1 L1017.1,579.1 L1017.2,579.6 L1017.4,581.5 L1017.5,573.9 L1017.6,581.0 L1017.8,579.8 L1017.9,574.3 L1018.0,576.3 L1018.2,580.6 L1018.3,581.5 L1018.4,578.3 L1018.6,577.3 L1018.7,578.8 L1018.8,581.9 L1018.9,580.9 L1019.1,578.0 L1019.2,574.6 L1019.3,577.2 L1019.5,578.2 L1019.6,576.0 L1019.7,575.6 L1019.9,579.3 L1020.0,576.1 L1020.1,578.3 L1020.3,573.9 L1020.4,578.5 L1020.5,575.7 L1020.7,574.7 L1020.8,578.6 L1020.9,573.7 L1021.1,575.9 L1021.2,575.7 L1021.3,573.4 L1021.5,574.0 L1021.6,578.4 L1021.7,582.0 L1021.9,574.0 L1022.0,578.9 L1022.1,574.4 L1022.3,577.4 L1022.4,579.5 L1022.5,578.4 L1022.7,581.0 L1022.8,574.5 L1022.9,574.3 L1023.1,578.5 L1023.2,573.0 L1023.3,574.9 L1023.5,574.4 L1023.6,576.9 L1023.7,572.5 L1023.9,577.5 L1024.0,572.6 L1024.1,570.4 L1024.3,574.4 L1024.4,575.9 L1024.5,568.5 L1024.7,579.3 L1024.8,576.2 L1024.9,582.8 L1025.1,580.2 L1025.2,578.8 L1025.3,576.4 L1025.4,575.0 L1025.6,576.3 L1025.7,581.3 L1025.8,573.5 L1026.0,572.1 L1026.1,579.5 L1026.2,573.2 L1026.4,579.1 L1026.5,577.6 L1026.6,575.0 L1026.8,579.1 L1026.9,576.2 L1027.0,575.5 L1027.2,573.0 L1027.3,572.1 L1027.4,575.2 L1027.6,574.6 L1027.7,574.8 L1027.8,573.6 L1028.0,570.7 L1028.1,571.4 L1028.2,577.3 L1028.4,476.7 L1028.5,576.5 L1028.6,574.6 L1028.8,570.2 L1028.9,576.4 L1029.0,575.6 L1029.2,576.9 L1029.3,575.9 L1029.4,576.4 L1029.6,576.3 L1029.7,576.2 L1029.8,575.2 L1030.0,573.7 L1030.1,577.7 L1030.2,577.0 L1030.4,576.8 L1030.5,578.1 L1030.6,578.8 L1030.8,578.4 L1030.9,579.6 L1031.0,579.1 L1031.2,576.1 L1031.3,575.4 L1031.4,576.5 L1031.6,577.3 L1031.7,573.4 L1031.8,577.0 L1031.9,577.4 L1032.1,578.1 L1032.2,572.3 L1032.3,575.4 L1032.5,580.3 L1032.6,571.4 L1032.7,577.6 L1032.9,574.8 L1033.0,575.4 L1033.1,581.7 L1033.3,576.7 L1033.4,575.1 L1033.5,571.5 L1033.7,575.6 L1033.8,573.2 L1033.9,574.4 L1034.1,587.1 L1034.2,578.7 L1034.3,578.3 L1034.5,578.7 L1034.6,577.1 L1034.7,575.4 L1034.9,579.9 L1035.0,575.6 L1035.1,572.3 L1035.3,572.5 L1035.4,575.8 L1035.5,572.4 L1035.7,575.9 L1035.8,576.5 L1035.9,585.7 L1036.1,578.5 L1036.2,576.2 L1036.3,573.9 L1036.5,574.4 L1036.6,582.0 L1036.7,573.3 L1036.9,575.3 L1037.0,576.4 L1037.1,573.5 L1037.3,577.4 L1037.4,576.6 L1037.5,574.9 L1037.7,576.2 L1037.8,572.8 L1037.9,577.9 L1038.1,575.8 L1038.2,576.8 L1038.3,577.3 L1038.4,578.3 L1038.6,577.9 L1038.7,577.8 L1038.8,574.2 L1039.0,577.0 L1039.1,573.7 L1039.2,573.9 L1039.4,576.7 L1039.5,573.4 L1039.6,575.3 L1039.8,575.4 L1039.9,576.9 L1040.0,574.4 L1040.2,574.4 L1040.3,579.5 L1040.4,575.1 L1040.6,572.3 L1040.7,578.7 L1040.8,578.4 L1041.0,575.8 L1041.1,573.2 L1041.2,573.9 L1041.4,576.2 L1041.5,579.3 L1041.6,577.5 L1041.8,577.7 L1041.9,571.9 L1042.0,574.4 L1042.2,578.5 L1042.3,580.5 L1042.4,574.7 L1042.6,572.1 L1042.7,577.5 L1042.8,578.8 L1043.0,573.1 L1043.1,575.0 L1043.2,579.3 L1043.4,576.2 L1043.5,579.4 L1043.6,575.2 L1043.8,582.4 L1043.9,572.9 L1044.0,577.2 L1044.2,573.8 L1044.3,579.0 L1044.4,580.6 L1044.5,575.2 L1044.7,578.9 L1044.8,577.3 L1044.9,574.5 L1045.1,579.0 L1045.2,576.9 L1045.3,574.9 L1045.5,571.2 L1045.6,573.2 L1045.7,572.8 L1045.9,582.2 L1046.0,571.5 L1046.1,576.6 L1046.3,577.8 L1046.4,572.9 L1046.5,576.8 L1046.7,574.1 L1046.8,575.4 L1046.9,576.3 L1047.1,580.3 L1047.2,576.4 L1047.3,575.3 L1047.5,573.8 L1047.6,573.5 L1047.7,578.5 L1047.9,574.2 L1048.0,575.0 L1048.1,577.0 L1048.3,574.8 L1048.4,579.9 L1048.5,571.1 L1048.7,578.6 L1048.8,578.8 L1048.9,574.2 L1049.1,578.1 L1049.2,573.6 L1049.3,574.2 L1049.5,583.4 L1049.6,576.7 L1049.7,581.3 L1049.9,576.1 L1050.0,576.8 L1050.1,572.5 L1050.3,578.9 L1050.4,577.6 L1050.5,576.3 L1050.7,577.7 L1050.8,581.4 L1050.9,577.1 L1051.0,576.0 L1051.2,576.2 L1051.3,576.9 L1051.4,578.8 L1051.6,571.6 L1051.7,572.9 L1051.8,578.9 L1052.0,575.5 L1052.1,582.3 L1052.2,579.8 L1052.4,576.4 L1052.5,575.6 L1052.6,578.7 L1052.8,571.1 L1052.9,581.9 L1053.0,580.5 L1053.2,576.3 L1053.3,573.7 L1053.4,578.4 L1053.6,571.2 L1053.7,576.3 L1053.8,574.7 L1054.0,574.2 L1054.1,576.8 L1054.2,579.0 L1054.4,576.9 L1054.5,572.8 L1054.6,572.8 L1054.8,575.6 L1054.9,579.0 L1055.0,574.0 L1055.2,572.9 L1055.3,575.7 L1055.4,577.6 L1055.6,575.8 L1055.7,577.9 L1055.8,581.3 L1056.0,571.6 L1056.1,568.0 L1056.2,576.4 L1056.4,576.9 L1056.5,578.4 L1056.6,577.7 L1056.8,574.9 L1056.9,575.4 L1057.0,577.4 L1057.2,577.0 L1057.3,571.8 L1057.4,578.5 L1057.5,577.3 L1057.7,574.0 L1057.8,571.6 L1057.9,573.7 L1058.1,574.2 L1058.2,576.7 L1058.3,575.4 L1058.5,573.4 L1058.6,573.3 L1058.7,572.4 L1058.9,578.9 L1059.0,568.1 L1059.1,570.4 L1059.3,574.9 L1059.4,578.4 L1059.5,571.9 L1059.7,572.4 L1059.8,575.6 L1059.9,576.2 L1060.1,571.4 L1060.2,573.9 L1060.3,578.2 L1060.5,577.1 L1060.6,572.8 L1060.7,578.2 L1060.9,572.9 L1061.0,573.4 L1061.1,573.8 L1061.3,578.9 L1061.4,576.7 L1061.5,577.0 L1061.7,579.8 L1061.8,571.4 L1061.9,572.6 L1062.1,576.4 L1062.2,580.2 L1062.3,571.0 L1062.5,580.5 L1062.6,576.5 L1062.7,580.4 L1062.9,576.6 L1063.0,573.7 L1063.1,580.2 L1063.3,571.5 L1063.4,577.9 L1063.5,573.9 L1063.7,572.3 L1063.8,574.8 L1063.9,576.7 L1064.0,577.3 L1064.2,577.5 L1064.3,576.7 L1064.4,575.9 L1064.6,576.8 L1064.7,577.7 L1064.8,576.2 L1065.0,572.6 L1065.1,572.6 L1065.2,577.8 L1065.4,574.9 L1065.5,578.7 L1065.6,568.7 L1065.8,576.1 L1065.9,578.9 L1066.0,569.9 L1066.2,578.4 L1066.3,570.1 L1066.4,576.4 L1066.6,577.5 L1066.7,577.6 L1066.8,576.9 L1067.0,581.0 L1067.1,573.2 L1067.2,572.8 L1067.4,577.9 L1067.5,576.0 L1067.6,575.9 L1067.8,576.9 L1067.9,574.7 L1068.0,574.9 L1068.2,577.1 L1068.3,576.5 L1068.4,578.8 L1068.6,577.5 L1068.7,574.0 L1068.8,568.5 L1069.0,578.1 L1069.1,579.6 L1069.2,576.3 L1069.4,577.3 L1069.5,576.9 L1069.6,583.1 L1069.8,568.6 L1069.9,571.9 L1070.0,573.8 L1070.2,572.4 L1070.3,574.9 L1070.4,569.6 L1070.5,576.0 L1070.7,576.6 L1070.8,576.2 L1070.9,579.1 L1071.1,577.6 L1071.2,579.4 L1071.3,574.9 L1071.5,579.4 L1071.6,574.2 L1071.7,576.8 L1071.9,578.8 L1072.0,578.7 L1072.1,575.1 L1072.3,574.2 L1072.4,578.9 L1072.5,575.6 L1072.7,572.0 L1072.8,579.4 L1072.9,578.0 L1073.1,576.2 L1073.2,573.5 L1073.3,574.6 L1073.5,576.7 L1073.6,574.3 L1073.7,579.7 L1073.9,576.9 L1074.0,578.2 L1074.1,577.8 L1074.3,580.5 L1074.4,573.9 L1074.5,579.7 L1074.7,579.6 L1074.8,576.4 L1074.9,581.2 L1075.1,581.3 L1075.2,577.7 L1075.3,579.5 L1075.5,577.6 L1075.6,576.2 L1075.7,582.2 L1075.9,575.9 L1076.0,572.5 L1076.1,571.9 L1076.3,576.0 L1076.4,575.1 L1076.5,579.9 L1076.7,572.5 L1076.8,574.3 L1076.9,576.2 L1077.0,578.9 L1077.2,576.8 L1077.3,577.9 L1077.4,574.4 L1077.6,570.6 L1077.7,575.1 L1077.8,576.6 L1078.0,576.9 L1078.1,575.6 L1078.2,579.4 L1078.4,572.7 L1078.5,571.3 L1078.6,574.5 L1078.8,579.5 L1078.9,576.2 L1079.0,583.8 L1079.2,577.1 L1079.3,576.3 L1079.4,579.2 L1079.6,579.0 L1079.7,572.3 L1079.8,577.2 L1080.0,573.2 L1080.1,577.2 L1080.2,576.9 L1080.4,575.0 L1080.5,574.5 L1080.6,580.3 L1080.8,574.2 L1080.9,577.3 L1081.0,576.1 L1081.2,574.3 L1081.3,579.3 L1081.4,579.6 L1081.6,568.7 L1081.7,573.1 L1081.8,577.6 L1082.0,577.1 L1082.1,575.4 L1082.2,577.1 L1082.4,577.5 L1082.5,576.9 L1082.6,576.0 L1082.8,571.6 L1082.9,574.0 L1083.0,576.9 L1083.2,576.2 L1083.3,570.9 L1083.4,577.5 L1083.5,580.2 L1083.7,582.1 L1083.8,576.5 L1083.9,575.3 L1084.1,574.9 L1084.2,578.6 L1084.3,574.8 L1084.5,577.7 L1084.6,577.2 L1084.7,579.9 L1084.9,578.1 L1085.0,574.1 L1085.1,570.6 L1085.3,578.2 L1085.4,574.0 L1085.5,577.5 L1085.7,582.4 L1085.8,573.8 L1085.9,571.2 L1086.1,582.7 L1086.2,577.8 L1086.3,580.7 L1086.5,579.6 L1086.6,577.1 L1086.7,583.3 L1086.9,574.4 L1087.0,581.5 L1087.1,575.1 L1087.3,573.3 L1087.4,574.7 L1087.5,577.2 L1087.7,578.0 L1087.8,578.6 L1087.9,567.4 L1088.1,575.4 L1088.2,581.6 L1088.3,567.0 L1088.5,575.5 L1088.6,576.4 L1088.7,576.9 L1088.9,575.3 L1089.0,576.2 L1089.1,577.5 L1089.3,579.9 L1089.4,577.2 L1089.5,578.3 L1089.7,577.8 L1089.8,577.5 L1089.9,580.8 L1090.0,575.3 L1090.2,583.7 L1090.3,582.7 L1090.4,573.5 L1090.6,573.7 L1090.7,583.3 L1090.8,582.5 L1091.0,572.0 L1091.1,566.0 L1091.2,574.0 L1091.4,576.6 L1091.5,572.7 L1091.6,572.7 L1091.8,580.2 L1091.9,578.9 L1092.0,572.9 L1092.2,575.0 L1092.3,570.6 L1092.4,578.9 L1092.6,571.7 L1092.7,580.8 L1092.8,573.2 L1093.0,581.5 L1093.1,573.1 L1093.2,576.0 L1093.4,574.3 L1093.5,576.2 L1093.6,574.6 L1093.8,579.0 L1093.9,568.1 L1094.0,573.4 L1094.2,571.9 L1094.3,576.3 L1094.4,581.4 L1094.6,582.0 L1094.7,575.9 L1094.8,578.8 L1095.0,578.1 L1095.1,575.0 L1095.2,570.9 L1095.4,575.2 L1095.5,577.7 L1095.6,576.5 L1095.8,575.8 L1095.9,570.4 L1096.0,576.0 L1096.2,575.0 L1096.3,575.4 L1096.4,579.6 L1096.5,571.2 L1096.7,575.7 L1096.8,576.5 L1096.9,576.7 L1097.1,577.1 L1097.2,573.9 L1097.3,575.8 L1097.5,569.4 L1097.6,584.3 L1097.7,573.7 L1097.9,572.8 L1098.0,578.3 L1098.1,573.8 L1098.3,574.8 L1098.4,569.5 L1098.5,576.6 L1098.7,574.7 L1098.8,573.3 L1098.9,575.5 L1099.1,576.6 L1099.2,576.1 L1099.3,579.7 L1099.5,577.3 L1099.6,573.3 L1099.7,579.4 L1099.9,582.7 L1100.0,572.8 L1100.1,577.6 L1100.3,569.5 L1100.4,577.4 L1100.5,584.6 L1100.7,578.1 L1100.8,574.4 L1100.9,577.5 L1101.1,579.1 L1101.2,579.1 L1101.3,577.8 L1101.5,578.2 L1101.6,573.5 L1101.7,575.0 L1101.9,581.6 L1102.0,574.3 L1102.1,576.7 L1102.3,572.0 L1102.4,574.3 L1102.5,576.2 L1102.7,578.5 L1102.8,578.5 L1102.9,573.4 L1103.0,572.2 L1103.2,574.5 L1103.3,575.1 L1103.4,574.1 L1103.6,577.3 L1103.7,577.8 L1103.8,579.8 L1104.0,581.2 L1104.1,574.5 L1104.2,578.5 L1104.4,578.2 L1104.5,574.5 L1104.6,577.7 L1104.8,572.6 L1104.9,577.6 L1105.0,575.9 L1105.2,579.7 L1105.3,573.5 L1105.4,576.2 L1105.6,573.8 L1105.7,574.6 L1105.8,576.2 L1106.0,574.5 L1106.1,572.5 L1106.2,576.1 L1106.4,571.2 L1106.5,575.2 L1106.6,577.8 L1106.8,573.5 L1106.9,571.0 L1107.0,579.7 L1107.2,574.8 L1107.3,575.5 L1107.4,577.5 L1107.6,574.2 L1107.7,579.2 L1107.8,575.7 L1108.0,577.2 L1108.1,581.8 L1108.2,573.1 L1108.4,573.7 L1108.5,574.2 L1108.6,584.5 L1108.8,572.9 L1108.9,577.5 L1109.0,581.7 L1109.2,577.0 L1109.3,575.9 L1109.4,575.8 L1109.5,581.0 L1109.7,572.0 L1109.8,574.0 L1109.9,576.3 L1110.1,579.9 L1110.2,577.1 L1110.3,579.4 L1110.5,579.5 L1110.6,574.6 L1110.7,575.3 L1110.9,577.5 L1111.0,568.3 L1111.1,576.1 L1111.3,577.2 L1111.4,574.5 L1111.5,579.2 L1111.7,576.6 L1111.8,573.1 L1111.9,580.0 L1112.1,576.1 L1112.2,575.5 L1112.3,579.4 L1112.5,575.7 L1112.6,575.8 L1112.7,578.1 L1112.9,574.1 L1113.0,575.6 L1113.1,578.6 L1113.3,577.3 L1113.4,577.5 L1113.5,572.3 L1113.7,582.4 L1113.8,574.6 L1113.9,573.7 L1114.1,581.9 L1114.2,576.8 L1114.3,576.4 L1114.5,575.4 L1114.6,574.7 L1114.7,575.3 L1114.9,561.3 L1115.0,577.1 L1115.1,579.6 L1115.3,575.6 L1115.4,575.9 L1115.5,577.2 L1115.7,579.2 L1115.8,575.1 L1115.9,577.0 L1116.0,576.1 L1116.2,581.9 L1116.3,576.8 L1116.4,578.7 L1116.6,574.9 L1116.7,570.0 L1116.8,574.0 L1117.0,576.8 L1117.1,578.7 L1117.2,579.8 L1117.4,575.4 L1117.5,570.3 L1117.6,568.4 L1117.8,580.6 L1117.9,577.0 L1118.0,574.0 L1118.2,575.3 L1118.3,576.9 L1118.4,579.1 L1118.6,578.3 L1118.7,577.1 L1118.8,570.7 L1119.0,575.8 L1119.1,576.7 L1119.2,580.0 L1119.4,571.0 L1119.5,577.8 L1119.6,573.8 L1119.8,574.3 L1119.9,572.1 L1120.0,577.5 L1120.2,576.8 L1120.3,583.8 L1120.4,578.1 L1120.6,580.8 L1120.7,573.8 L1120.8,576.6 L1121.0,578.9 L1121.1,572.5 L1121.2,576.2 L1121.4,576.5 L1121.5,575.1 L1121.6,576.8 L1121.8,573.0 L1121.9,577.1 L1122.0,576.7 L1122.2,577.1 L1122.3,573.0 L1122.4,576.9 L1122.5,579.7 L1122.7,575.7 L1122.8,575.8 L1122.9,575.3 L1123.1,572.0 L1123.2,571.2 L1123.3,584.4 L1123.5,573.7 L1123.6,574.1 L1123.7,576.0 L1123.9,574.4 L1124.0,574.3 L1124.1,580.9 L1124.3,574.8 L1124.4,575.3 L1124.5,576.7 L1124.7,575.3 L1124.8,575.4 L1124.9,574.2 L1125.1,571.7 L1125.2,575.4 L1125.3,574.0 L1125.5,572.2 L1125.6,572.7 L1125.7,578.2 L1125.9,563.9 L1126.0,576.3 L1126.1,577.6 L1126.3,577.7 L1126.4,576.1 L1126.5,577.5 L1126.7,572.7 L1126.8,570.4 L1126.9,573.0 L1127.1,572.6 L1127.2,576.5 L1127.3,581.5 L1127.5,581.0 L1127.6,574.4 L1127.7,578.5 L1127.9,569.8 L1128.0,571.1 L1128.1,571.6 L1128.3,575.3 L1128.4,578.0 L1128.5,576.1 L1128.7,573.2 L1128.8,577.0 L1128.9,579.0 L1129.0,579.0 L1129.2,582.3 L1129.3,573.0 L1129.4,574.3 L1129.6,580.6 L1129.7,573.6 L1129.8,571.1 L1130.0,578.1 L1130.1,576.8 L1130.2,574.9 L1130.4,575.0 L1130.5,574.5 L1130.6,577.3 L1130.8,579.2 L1130.9,578.3 L1131.0,573.5 L1131.2,575.4 L1131.3,575.0 L1131.4,571.3 L1131.6,581.0 L1131.7,573.0 L1131.8,579.7 L1132.0,577.5 L1132.1,576.9 L1132.2,580.0 L1132.4,577.9 L1132.5,572.0 L1132.6,633.2 L1132.8,573.4 L1132.9,573.0 L1133.0,578.8 L1133.2,576.6 L1133.3,577.8 L1133.4,572.4 L1133.6,576.0 L1133.7,577.3 L1133.8,576.6 L1134.0,576.9 L1134.1,574.4 L1134.2,574.6 L1134.4,574.2 L1134.5,573.3 L1134.6,576.7 L1134.8,576.3 L1134.9,574.1 L1135.0,570.8 L1135.1,574.7 L1135.3,573.2 L1135.4,570.3 L1135.5,571.7 L1135.7,577.6 L1135.8,578.7 L1135.9,577.2 L1136.1,578.4 L1136.2,574.2 L1136.3,580.6 L1136.5,581.9 L1136.6,576.9 L1136.7,575.3 L1136.9,574.3 L1137.0,581.6 L1137.1,571.6 L1137.3,578.7 L1137.4,570.3 L1137.5,577.6 L1137.7,575.9 L1137.8,581.6 L1137.9,571.8 L1138.1,573.9 L1138.2,578.0 L1138.3,575.9 L1138.5,578.7 L1138.6,579.8 L1138.7,575.7 L1138.9,576.8 L1139.0,573.8 L1139.1,577.3 L1139.3,572.7 L1139.4,571.5 L1139.5,575.1 L1139.7,476.7 L1139.8,577.2 L1139.9,580.7 L1140.1,577.7 L1140.2,575.9 L1140.3,577.6 L1140.5,572.6 L1140.6,577.2 L1140.7,581.4 L1140.9,572.4 L1141.0,580.2 L1141.1,573.3 L1141.3,574.1 L1141.4,578.8 L1141.5,575.2 L1141.6,577.2 L1141.8,579.1 L1141.9,574.7 L1142.0,578.8 L1142.2,577.7 L1142.3,573.7 L1142.4,580.3 L1142.6,578.5 L1142.7,580.4 L1142.8,572.8 L1143.0,579.0 L1143.1,575.3 L1143.2,577.4 L1143.4,578.0 L1143.5,577.8 L1143.6,575.4 L1143.8,578.3 L1143.9,573.0 L1144.0,574.1 L1144.2,579.0 L1144.3,573.1 L1144.4,576.5 L1144.6,576.2 L1144.7,576.5 L1144.8,575.4 L1145.0,576.1 L1145.1,577.1 L1145.2,575.8 L1145.4,572.6 L1145.5,578.1 L1145.6,577.2 L1145.8,573.7 L1145.9,584.0 L1146.0,579.2 L1146.2,576.5 L1146.3,576.9 L1146.4,568.5 L1146.6,578.0 L1146.7,577.4 L1146.8,574.1 L1147.0,582.9 L1147.1,573.6 L1147.2,575.0 L1147.4,578.1 L1147.5,580.2 L1147.6,575.4 L1147.8,573.8 L1147.9,576.7 L1148.0,579.6 L1148.1,576.9 L1148.3,578.1 L1148.4,578.6 L1148.5,583.3 L1148.7,572.6 L1148.8,578.5 L1148.9,576.3 L1149.1,575.9 L1149.2,577.8 L1149.3,577.9 L1149.5,582.0 L1149.6,588.6 L1149.7,577.0 L1149.9,576.1 L1150.0,579.3 L1150.1,571.9 L1150.3,577.5 L1150.4,576.3 L1150.5,570.5 L1150.7,580.8 L1150.8,576.4 L1150.9,573.7 L1151.1,574.7 L1151.2,577.0 L1151.3,581.0 L1151.5,576.9 L1151.6,574.1 L1151.7,578.1 L1151.9,582.0 L1152.0,586.3 L1152.1,578.2 L1152.3,573.4 L1152.4,576.1 L1152.5,576.6 L1152.7,575.5 L1152.8,577.2 L1152.9,579.6 L1153.1,575.1 L1153.2,572.4 L1153.3,578.7 L1153.5,575.3 L1153.6,577.6 L1153.7,572.1 L1153.9,576.6 L1154.0,577.4 L1154.1,577.2 L1154.3,577.9 L1154.4,586.8 L1154.5,576.4 L1154.6,577.1 L1154.8,583.1 L1154.9,577.1 L1155.0,576.2 L1155.2,577.2 L1155.3,577.0 L1155.4,576.0 L1155.6,572.0 L1155.7,577.6 L1155.8,574.3 L1156.0,573.8 L1156.1,583.1 L1156.2,576.8 L1156.4,575.8 L1156.5,576.1 L1156.6,579.8 L1156.8,577.8 L1156.9,577.5 L1157.0,580.2 L1157.2,578.0 L1157.3,579.4 L1157.4,581.5 L1157.6,576.6 L1157.7,576.7 L1157.8,580.4 L1158.0,573.6 L1158.1,574.7 L1158.2,576.0 L1158.4,570.8 L1158.5,576.7 L1158.6,574.1 L1158.8,578.5 L1158.9,577.5 L1159.0,572.4 L1159.2,575.3 L1159.3,582.2 L1159.4,571.2 L1159.6,575.3 L1159.7,571.9 L1159.8,575.4 L1160.0,576.2 L1160.1,572.4 L1160.2,571.9 L1160.4,578.0 L1160.5,577.9 L1160.6,571.4 L1160.8,581.5 L1160.9,572.5 L1161.0,576.8 L1161.1,571.9 L1161.3,583.8 L1161.4,581.8 L1161.5,573.6 L1161.7,576.3 L1161.8,576.5 L1161.9,577.0 L1162.1,570.4 L1162.2,576.9 L1162.3,575.5 L1162.5,576.2 L1162.6,575.5 L1162.7,570.9 L1162.9,579.5 L1163.0,579.0 L1163.1,579.2 L1163.3,573.1 L1163.4,579.2 L1163.5,572.9 L1163.7,577.6 L1163.8,574.3 L1163.9,577.1 L1164.1,575.2 L1164.2,576.7 L1164.3,579.3 L1164.5,579.0 L1164.6,575.5 L1164.7,575.9 L1164.9,576.8 L1165.0,579.7 L1165.1,580.4 L1165.3,577.9 L1165.4,572.0 L1165.5,580.6 L1165.7,576.5 L1165.8,573.7 L1165.9,570.8 L1166.1,576.7 L1166.2,577.2 L1166.3,574.7 L1166.5,574.9 L1166.6,575.2 L1166.7,580.1 L1166.9,580.1 L1167.0,575.6 L1167.1,580.3 L1167.3,573.4 L1167.4,575.5 L1167.5,576.4 L1167.6,575.2 L1167.8,577.0 L1167.9,574.3 L1168.0,578.5 L1168.2,573.7 L1168.3,576.6 L1168.4,579.0 L1168.6,572.2 L1168.7,580.6 L1168.8,575.8 L1169.0,576.6 L1169.1,576.0 L1169.2,581.7 L1169.4,576.4 L1169.5,576.0 L1169.6,577.9 L1169.8,574.8 L1169.9,573.7 L1170.0,574.2 L1170.2,582.5 L1170.3,575.8 L1170.4,574.7 L1170.6,575.7 L1170.7,576.2 L1170.8,573.9 L1171.0,578.2 L1171.1,576.2 L1171.2,574.0 L1171.4,577.5 L1171.5,573.3 L1171.6,575.2 L1171.8,573.9 L1171.9,574.5 L1172.0,576.1 L1172.2,577.8 L1172.3,574.6 L1172.4,575.1 L1172.6,577.3 L1172.7,579.3 L1172.8,579.8 L1173.0,579.9 L1173.1,576.6 L1173.2,577.0 L1173.4,577.1 L1173.5,577.6 L1173.6,568.7 L1173.8,577.9 L1173.9,576.5 L1174.0,576.8 L1174.1,581.4 L1174.3,574.7 L1174.4,575.1 L1174.5,578.3 L1174.7,575.8 L1174.8,576.1 L1174.9,577.4 L1175.1,576.3 L1175.2,576.6 L1175.3,580.4 L1175.5,575.3 L1175.6,573.5 L1175.7,577.3 L1175.9,573.8 L1176.0,576.7 L1176.1,576.9 L1176.3,576.3 L1176.4,576.4 L1176.5,579.7 L1176.7,575.4 L1176.8,576.3 L1176.9,575.0 L1177.1,574.2 L1177.2,573.9 L1177.3,574.5 L1177.5,575.7 L1177.6,579.0 L1177.7,575.6 L1177.9,572.0 L1178.0,581.6 L1178.1,577.1 L1178.3,575.9 L1178.4,574.1 L1178.5,576.1 L1178.7,574.4 L1178.8,578.4 L1178.9,575.0 L1179.1,580.1 L1179.2,576.2 L1179.3,572.4 L1179.5,570.8 L1179.6,580.5 L1179.7,573.6 L1179.9,578.5 L1180.0,576.4 L1180.1,574.4 L1180.3,576.8 L1180.4,577.3 L1180.5,580.3 L1180.6,571.0 L1180.8,575.9 L1180.9,583.1 L1181.0,579.6 L1181.2,569.9 L1181.3,573.0 L1181.4,577.0 L1181.6,576.4 L1181.7,579.0 L1181.8,578.9 L1182.0,576.3 L1182.1,575.4 L1182.2,577.3 L1182.4,579.3 L1182.5,579.0 L1182.6,578.0 L1182.8,573.4 L1182.9,578.3 L1183.0,571.8 L1183.2,575.8 L1183.3,579.0 L1183.4,612.0" fill="none" stroke="#0000ff" stroke-width="1.6" stroke-linejoin="round"/></g>
<rect x="1116.1" y="519.6" width="65.5" height="16.5" rx="2.5" fill="#fff" fill-opacity="0.8" stroke="#cccccc" stroke-width="1"/>
<line x1="1118.3" y1="527.9" x2="1140.5" y2="527.9" stroke="#0000ff" stroke-width="1.5"/>
<text x="1144.40" y="531.00" font-size="10.7" text-anchor="start" fill="#000" textLength="32.90" lengthAdjust="spacingAndGlyphs" >y=550</text>
<rect x="911.0" y="516.8" width="274.0" height="120.20000000000005" fill="none" stroke="#000" stroke-width="1.6"/>
<line x1="911.90" y1="637.0" x2="911.90" y2="643.8" stroke="#000" stroke-width="1.4"/>
<text x="911.90" y="659.80" font-size="10.7" text-anchor="middle" fill="#000" >0</text>
<line x1="978.22" y1="637.0" x2="978.22" y2="643.8" stroke="#000" stroke-width="1.4"/>
<text x="978.22" y="659.80" font-size="10.7" text-anchor="middle" fill="#000" >500</text>
<line x1="1044.55" y1="637.0" x2="1044.55" y2="643.8" stroke="#000" stroke-width="1.4"/>
<text x="1044.55" y="659.80" font-size="10.7" text-anchor="middle" fill="#000" >1000</text>
<line x1="1110.88" y1="637.0" x2="1110.88" y2="643.8" stroke="#000" stroke-width="1.4"/>
<text x="1110.88" y="659.80" font-size="10.7" text-anchor="middle" fill="#000" >1500</text>
<line x1="1177.20" y1="637.0" x2="1177.20" y2="643.8" stroke="#000" stroke-width="1.4"/>
<text x="1177.20" y="659.80" font-size="10.7" text-anchor="middle" fill="#000" >2000</text>
<line x1="904.2" y1="612.00" x2="911.0" y2="612.00" stroke="#000" stroke-width="1.4"/>
<text x="896.00" y="615.85" font-size="10.7" text-anchor="end" fill="#000" >0</text>
<line x1="904.2" y1="566.90" x2="911.0" y2="566.90" stroke="#000" stroke-width="1.4"/>
<text x="896.00" y="570.75" font-size="10.7" text-anchor="end" fill="#000" >200</text>
<line x1="904.2" y1="521.80" x2="911.0" y2="521.80" stroke="#000" stroke-width="1.4"/>
<text x="896.00" y="525.65" font-size="10.7" text-anchor="end" fill="#000" >400</text>
<text x="1048.00" y="678.00" font-size="10.7" text-anchor="middle" fill="#000" >X</text>
<text x="866.80" y="577.70" font-size="10.7" text-anchor="middle" fill="#000" textLength="33.40" lengthAdjust="spacingAndGlyphs" transform="rotate(-90 866.80 577.70)" >counts</text>
<text x="1193.40" y="575.50" font-size="10.7" text-anchor="middle" fill="#000" textLength="37.80" lengthAdjust="spacingAndGlyphs" transform="rotate(90 1193.40 575.50)" >cut in x</text>
<clipPath id="c2clip"><rect x="911.0" y="688.8" width="274.0" height="119.90000000000009"/></clipPath>
<g clip-path="url(#c2clip)"><path d="M913.2,783.7 L913.4,730.3 L913.7,726.0 L913.9,730.6 L914.2,727.2 L914.4,730.4 L914.7,730.6 L914.9,723.0 L915.2,717.4 L915.4,729.3 L915.6,733.9 L915.9,721.8 L916.1,725.3 L916.4,726.6 L916.6,730.5 L916.9,728.9 L917.1,718.0 L917.4,727.9 L917.6,729.6 L917.8,723.2 L918.1,725.4 L918.3,732.5 L918.6,729.9 L918.8,724.9 L919.1,726.6 L919.3,729.1 L919.6,728.2 L919.8,727.7 L920.0,727.1 L920.3,718.3 L920.5,724.4 L920.8,730.3 L921.0,728.6 L921.3,725.0 L921.5,724.8 L921.8,727.1 L922.0,725.6 L922.2,729.5 L922.5,722.4 L922.7,725.3 L923.0,730.8 L923.2,727.3 L923.5,725.7 L923.7,728.1 L923.9,726.8 L924.2,727.6 L924.4,724.2 L924.7,724.8 L924.9,728.7 L925.2,727.2 L925.4,744.1 L925.7,727.9 L925.9,726.2 L926.1,725.9 L926.4,721.8 L926.6,725.0 L926.9,727.6 L927.1,728.4 L927.4,723.2 L927.6,726.4 L927.9,724.5 L928.1,733.3 L928.3,730.4 L928.6,722.0 L928.8,729.4 L929.1,726.5 L929.3,728.0 L929.6,727.4 L929.8,727.9 L930.1,729.1 L930.3,732.1 L930.5,726.1 L930.8,730.3 L931.0,725.4 L931.3,728.2 L931.5,729.6 L931.8,727.7 L932.0,729.7 L932.3,728.6 L932.5,724.4 L932.7,724.2 L933.0,730.4 L933.2,729.2 L933.5,721.4 L933.7,732.5 L934.0,734.9 L934.2,736.1 L934.5,732.9 L934.7,726.8 L934.9,729.1 L935.2,735.9 L935.4,729.2 L935.7,725.6 L935.9,724.1 L936.2,730.9 L936.4,734.4 L936.7,730.5 L936.9,732.0 L937.1,730.0 L937.4,733.3 L937.6,733.8 L937.9,729.8 L938.1,728.4 L938.4,728.6 L938.6,735.5 L938.9,730.7 L939.1,728.8 L939.3,729.8 L939.6,727.8 L939.8,732.6 L940.1,725.9 L940.3,730.0 L940.6,724.8 L940.8,737.4 L941.1,726.3 L941.3,730.6 L941.5,733.0 L941.8,729.6 L942.0,731.1 L942.3,732.7 L942.5,733.0 L942.8,730.2 L943.0,733.0 L943.2,731.9 L943.5,731.4 L943.7,737.6 L944.0,732.9 L944.2,728.5 L944.5,727.0 L944.7,736.3 L945.0,728.5 L945.2,724.5 L945.4,726.3 L945.7,730.4 L945.9,727.5 L946.2,732.1 L946.4,724.1 L946.7,728.5 L946.9,732.3 L947.2,727.4 L947.4,734.8 L947.6,735.2 L947.9,730.8 L948.1,727.2 L948.4,731.3 L948.6,731.0 L948.9,730.1 L949.1,730.3 L949.4,729.7 L949.6,734.8 L949.8,738.5 L950.1,730.8 L950.3,731.5 L950.6,733.1 L950.8,736.5 L951.1,734.9 L951.3,733.6 L951.6,731.3 L951.8,734.0 L952.0,736.4 L952.3,733.6 L952.5,742.1 L952.8,733.2 L953.0,715.8 L953.3,736.6 L953.5,730.3 L953.8,732.1 L954.0,731.6 L954.2,734.5 L954.5,738.1 L954.7,731.7 L955.0,734.4 L955.2,732.2 L955.5,734.6 L955.7,725.9 L956.0,736.3 L956.2,731.1 L956.4,731.8 L956.7,731.9 L956.9,737.1 L957.2,734.8 L957.4,735.9 L957.7,734.7 L957.9,736.6 L958.2,737.1 L958.4,733.4 L958.6,736.2 L958.9,732.8 L959.1,736.1 L959.4,732.9 L959.6,725.4 L959.9,734.7 L960.1,730.7 L960.3,733.7 L960.6,737.6 L960.8,744.2 L961.1,732.9 L961.3,734.3 L961.6,737.7 L961.8,740.9 L962.1,727.4 L962.3,736.2 L962.5,735.6 L962.8,733.2 L963.0,737.6 L963.3,735.2 L963.5,734.6 L963.8,737.3 L964.0,736.8 L964.3,734.0 L964.5,734.8 L964.7,735.7 L965.0,738.0 L965.2,740.8 L965.5,735.3 L965.7,741.5 L966.0,734.0 L966.2,734.4 L966.5,739.8 L966.7,744.7 L966.9,737.3 L967.2,733.3 L967.4,739.6 L967.7,742.0 L967.9,734.1 L968.2,736.9 L968.4,742.1 L968.7,735.3 L968.9,729.4 L969.1,737.0 L969.4,738.3 L969.6,738.4 L969.9,736.2 L970.1,735.1 L970.4,736.6 L970.6,736.2 L970.9,736.4 L971.1,725.9 L971.3,737.2 L971.6,733.9 L971.8,742.4 L972.1,741.7 L972.3,739.7 L972.6,734.9 L972.8,739.0 L973.1,747.5 L973.3,741.6 L973.5,737.0 L973.8,741.8 L974.0,741.4 L974.3,739.2 L974.5,742.4 L974.8,740.0 L975.0,747.5 L975.3,743.4 L975.5,743.1 L975.7,737.5 L976.0,742.7 L976.2,737.8 L976.5,739.4 L976.7,741.9 L977.0,740.0 L977.2,740.9 L977.5,738.8 L977.7,741.0 L977.9,740.4 L978.2,741.0 L978.4,738.6 L978.7,742.2 L978.9,738.5 L979.2,738.1 L979.4,741.4 L979.6,742.7 L979.9,738.9 L980.1,738.7 L980.4,742.7 L980.6,740.5 L980.9,741.0 L981.1,736.8 L981.4,739.7 L981.6,738.5 L981.8,744.5 L982.1,740.6 L982.3,740.8 L982.6,744.6 L982.8,741.6 L983.1,740.9 L983.3,744.3 L983.6,741.9 L983.8,740.1 L984.0,738.3 L984.3,739.5 L984.5,740.2 L984.8,740.6 L985.0,742.7 L985.3,739.9 L985.5,743.3 L985.8,742.4 L986.0,737.9 L986.2,743.3 L986.5,739.8 L986.7,740.0 L987.0,740.5 L987.2,741.9 L987.5,743.2 L987.7,740.2 L988.0,737.3 L988.2,741.8 L988.4,745.3 L988.7,744.0 L988.9,737.9 L989.2,742.2 L989.4,744.7 L989.7,738.9 L989.9,742.9 L990.2,742.5 L990.4,739.0 L990.6,741.5 L990.9,739.0 L991.1,743.7 L991.4,739.9 L991.6,740.6 L991.9,744.9 L992.1,739.6 L992.4,737.6 L992.6,738.5 L992.8,741.3 L993.1,738.0 L993.3,742.7 L993.6,733.3 L993.8,743.3 L994.1,742.4 L994.3,747.7 L994.6,739.2 L994.8,738.5 L995.0,741.2 L995.3,737.6 L995.5,744.0 L995.8,740.6 L996.0,745.5 L996.3,742.1 L996.5,739.9 L996.8,743.7 L997.0,739.3 L997.2,746.2 L997.5,738.6 L997.7,743.4 L998.0,741.5 L998.2,745.1 L998.5,742.9 L998.7,750.8 L998.9,741.8 L999.2,739.9 L999.4,740.5 L999.7,741.8 L999.9,742.4 L1000.2,744.4 L1000.4,752.0 L1000.7,745.8 L1000.9,745.9 L1001.1,744.8 L1001.4,748.2 L1001.6,740.9 L1001.9,734.9 L1002.1,744.4 L1002.4,741.1 L1002.6,745.5 L1002.9,745.5 L1003.1,747.0 L1003.3,744.6 L1003.6,742.0 L1003.8,738.4 L1004.1,743.9 L1004.3,737.5 L1004.6,741.1 L1004.8,740.9 L1005.1,745.0 L1005.3,741.4 L1005.5,745.4 L1005.8,739.3 L1006.0,746.2 L1006.3,745.9 L1006.5,745.8 L1006.8,742.8 L1007.0,742.0 L1007.3,741.9 L1007.5,741.8 L1007.7,740.5 L1008.0,746.4 L1008.2,751.8 L1008.5,744.6 L1008.7,739.6 L1009.0,741.1 L1009.2,745.4 L1009.5,744.2 L1009.7,744.3 L1009.9,743.0 L1010.2,744.6 L1010.4,746.5 L1010.7,746.4 L1010.9,742.2 L1011.2,744.4 L1011.4,744.5 L1011.7,743.9 L1011.9,747.6 L1012.1,742.1 L1012.4,741.2 L1012.6,740.0 L1012.9,745.6 L1013.1,743.4 L1013.4,742.0 L1013.6,744.9 L1013.9,741.5 L1014.1,745.4 L1014.3,743.7 L1014.6,745.7 L1014.8,740.2 L1015.1,743.0 L1015.3,743.6 L1015.6,745.6 L1015.8,744.2 L1016.1,748.6 L1016.3,745.1 L1016.5,746.7 L1016.8,737.5 L1017.0,746.9 L1017.3,740.6 L1017.5,747.0 L1017.8,745.4 L1018.0,748.2 L1018.2,743.8 L1018.5,745.4 L1018.7,743.9 L1019.0,735.6 L1019.2,745.7 L1019.5,748.7 L1019.7,745.5 L1020.0,741.0 L1020.2,745.3 L1020.4,741.4 L1020.7,744.7 L1020.9,748.2 L1021.2,745.0 L1021.4,744.0 L1021.7,747.0 L1021.9,745.8 L1022.2,747.5 L1022.4,740.1 L1022.6,743.3 L1022.9,743.7 L1023.1,730.2 L1023.4,741.6 L1023.6,745.6 L1023.9,746.8 L1024.1,744.6 L1024.4,748.5 L1024.6,745.1 L1024.8,744.4 L1025.1,745.9 L1025.3,742.9 L1025.6,748.1 L1025.8,740.7 L1026.1,743.7 L1026.3,746.8 L1026.6,744.9 L1026.8,741.7 L1027.0,744.6 L1027.3,748.8 L1027.5,744.4 L1027.8,741.5 L1028.0,749.9 L1028.3,747.5 L1028.5,740.8 L1028.8,748.2 L1029.0,751.1 L1029.2,744.2 L1029.5,747.4 L1029.7,740.7 L1030.0,745.7 L1030.2,749.0 L1030.5,745.6 L1030.7,742.6 L1031.0,750.4 L1031.2,746.5 L1031.4,741.3 L1031.7,742.1 L1031.9,743.2 L1032.2,741.7 L1032.4,748.9 L1032.7,745.1 L1032.9,748.8 L1033.2,745.0 L1033.4,710.1 L1033.6,744.1 L1033.9,745.6 L1034.1,749.7 L1034.4,748.5 L1034.6,745.5 L1034.9,746.9 L1035.1,748.7 L1035.4,747.5 L1035.6,748.3 L1035.8,744.5 L1036.1,744.5 L1036.3,743.8 L1036.6,745.9 L1036.8,742.4 L1037.1,749.7 L1037.3,748.1 L1037.5,747.1 L1037.8,741.1 L1038.0,749.5 L1038.3,743.1 L1038.5,752.7 L1038.8,745.2 L1039.0,747.4 L1039.3,750.7 L1039.5,745.0 L1039.7,745.2 L1040.0,750.4 L1040.2,748.2 L1040.5,749.5 L1040.7,748.4 L1041.0,746.9 L1041.2,749.4 L1041.5,749.9 L1041.7,751.0 L1041.9,737.8 L1042.2,745.9 L1042.4,750.0 L1042.7,733.3 L1042.9,753.9 L1043.2,737.8 L1043.4,748.9 L1043.7,748.9 L1043.9,744.5 L1044.1,747.0 L1044.4,749.6 L1044.6,748.9 L1044.9,754.1 L1045.1,754.8 L1045.4,752.9 L1045.6,751.7 L1045.9,750.9 L1046.1,752.2 L1046.3,749.6 L1046.6,751.4 L1046.8,751.0 L1047.1,750.7 L1047.3,746.7 L1047.6,748.5 L1047.8,752.4 L1048.1,751.9 L1048.3,757.4 L1048.5,754.9 L1048.8,754.3 L1049.0,751.1 L1049.3,750.1 L1049.5,749.1 L1049.8,752.0 L1050.0,750.3 L1050.3,749.2 L1050.5,751.4 L1050.7,751.7 L1051.0,754.5 L1051.2,751.9 L1051.5,748.3 L1051.7,746.7 L1052.0,748.8 L1052.2,747.8 L1052.5,752.2 L1052.7,750.7 L1052.9,749.7 L1053.2,742.8 L1053.4,752.2 L1053.7,745.7 L1053.9,749.9 L1054.2,747.6 L1054.4,751.5 L1054.6,751.6 L1054.9,743.1 L1055.1,747.2 L1055.4,746.1 L1055.6,754.5 L1055.9,751.5 L1056.1,746.6 L1056.4,744.1 L1056.6,749.5 L1056.8,748.3 L1057.1,747.5 L1057.3,753.5 L1057.6,752.5 L1057.8,751.2 L1058.1,749.8 L1058.3,749.8 L1058.6,749.3 L1058.8,748.1 L1059.0,750.9 L1059.3,750.7 L1059.5,752.0 L1059.8,750.0 L1060.0,744.3 L1060.3,746.9 L1060.5,748.2 L1060.8,743.4 L1061.0,747.0 L1061.2,751.1 L1061.5,748.9 L1061.7,743.2 L1062.0,751.2 L1062.2,750.7 L1062.5,747.5 L1062.7,747.5 L1063.0,750.0 L1063.2,752.0 L1063.4,751.5 L1063.7,748.2 L1063.9,751.9 L1064.2,749.7 L1064.4,749.9 L1064.7,748.2 L1064.9,745.9 L1065.2,745.2 L1065.4,744.7 L1065.6,749.0 L1065.9,744.6 L1066.1,747.3 L1066.4,746.1 L1066.6,746.3 L1066.9,749.8 L1067.1,744.8 L1067.4,755.9 L1067.6,749.3 L1067.8,748.6 L1068.1,743.7 L1068.3,752.3 L1068.6,746.4 L1068.8,745.8 L1069.1,752.6 L1069.3,748.6 L1069.6,751.8 L1069.8,745.7 L1070.0,746.0 L1070.3,753.9 L1070.5,746.5 L1070.8,742.6 L1071.0,750.9 L1071.3,750.6 L1071.5,746.3 L1071.8,755.4 L1072.0,754.8 L1072.2,746.1 L1072.5,752.1 L1072.7,752.9 L1073.0,749.0 L1073.2,748.6 L1073.5,758.4 L1073.7,751.1 L1073.9,751.9 L1074.2,750.8 L1074.4,748.8 L1074.7,750.5 L1074.9,750.8 L1075.2,750.7 L1075.4,751.9 L1075.7,752.6 L1075.9,755.4 L1076.1,746.1 L1076.4,750.4 L1076.6,750.0 L1076.9,749.6 L1077.1,752.9 L1077.4,755.6 L1077.6,753.8 L1077.9,748.2 L1078.1,753.9 L1078.3,748.0 L1078.6,745.4 L1078.8,756.9 L1079.1,753.3 L1079.3,746.5 L1079.6,747.7 L1079.8,750.5 L1080.1,753.0 L1080.3,749.2 L1080.5,751.6 L1080.8,747.7 L1081.0,749.4 L1081.3,746.7 L1081.5,746.3 L1081.8,746.0 L1082.0,751.8 L1082.3,753.9 L1082.5,753.4 L1082.7,753.3 L1083.0,755.9 L1083.2,751.1 L1083.5,752.1 L1083.7,749.8 L1084.0,755.0 L1084.2,749.3 L1084.5,746.5 L1084.7,752.1 L1084.9,756.8 L1085.2,753.2 L1085.4,749.5 L1085.7,756.7 L1085.9,757.2 L1086.2,750.1 L1086.4,752.7 L1086.7,755.0 L1086.9,753.1 L1087.1,754.0 L1087.4,757.1 L1087.6,750.5 L1087.9,750.3 L1088.1,754.4 L1088.4,752.9 L1088.6,749.0 L1088.9,753.0 L1089.1,751.5 L1089.3,748.0 L1089.6,747.9 L1089.8,750.8 L1090.1,752.7 L1090.3,756.9 L1090.6,750.2 L1090.8,756.5 L1091.1,754.0 L1091.3,747.8 L1091.5,754.8 L1091.8,750.6 L1092.0,762.0 L1092.3,750.2 L1092.5,754.8 L1092.8,752.2 L1093.0,753.6 L1093.2,753.2 L1093.5,751.0 L1093.7,754.2 L1094.0,749.9 L1094.2,752.4 L1094.5,759.4 L1094.7,758.0 L1095.0,754.3 L1095.2,755.2 L1095.4,751.5 L1095.7,755.8 L1095.9,750.4 L1096.2,751.3 L1096.4,754.7 L1096.7,753.4 L1096.9,755.2 L1097.2,754.1 L1097.4,754.9 L1097.6,760.0 L1097.9,751.1 L1098.1,759.9 L1098.4,755.0 L1098.6,755.4 L1098.9,749.4 L1099.1,759.8 L1099.4,750.6 L1099.6,754.0 L1099.8,755.2 L1100.1,751.3 L1100.3,754.4 L1100.6,752.1 L1100.8,753.8 L1101.1,754.8 L1101.3,755.2 L1101.6,751.3 L1101.8,756.7 L1102.0,749.9 L1102.3,750.4 L1102.5,755.2 L1102.8,756.2 L1103.0,756.7 L1103.3,750.8 L1103.5,756.9 L1103.8,755.9 L1104.0,762.2 L1104.2,752.2 L1104.5,754.6 L1104.7,762.1 L1105.0,748.2 L1105.2,748.1 L1105.5,751.9 L1105.7,757.3 L1106.0,753.1 L1106.2,757.1 L1106.4,751.1 L1106.7,757.2 L1106.9,757.3 L1107.2,753.2 L1107.4,754.9 L1107.7,750.3 L1107.9,753.4 L1108.2,757.2 L1108.4,751.4 L1108.6,757.9 L1108.9,753.8 L1109.1,755.7 L1109.4,751.8 L1109.6,753.6 L1109.9,752.9 L1110.1,753.0 L1110.4,758.4 L1110.6,758.0 L1110.8,753.1 L1111.1,750.4 L1111.3,752.8 L1111.6,744.2 L1111.8,750.4 L1112.1,759.4 L1112.3,752.9 L1112.5,749.6 L1112.8,751.9 L1113.0,753.4 L1113.3,761.6 L1113.5,755.6 L1113.8,755.4 L1114.0,752.1 L1114.3,755.8 L1114.5,756.0 L1114.7,757.0 L1115.0,753.0 L1115.2,754.4 L1115.5,755.7 L1115.7,752.3 L1116.0,755.4 L1116.2,759.8 L1116.5,752.0 L1116.7,756.1 L1116.9,755.5 L1117.2,754.3 L1117.4,750.9 L1117.7,755.1 L1117.9,757.5 L1118.2,749.8 L1118.4,749.4 L1118.7,756.4 L1118.9,749.5 L1119.1,754.8 L1119.4,754.0 L1119.6,755.3 L1119.9,751.6 L1120.1,756.8 L1120.4,754.0 L1120.6,755.5 L1120.9,751.2 L1121.1,759.2 L1121.3,758.0 L1121.6,757.7 L1121.8,750.6 L1122.1,752.8 L1122.3,753.8 L1122.6,754.9 L1122.8,755.4 L1123.1,754.9 L1123.3,752.9 L1123.5,752.6 L1123.8,753.2 L1124.0,754.2 L1124.3,756.2 L1124.5,753.9 L1124.8,748.6 L1125.0,753.8 L1125.3,754.6 L1125.5,755.6 L1125.7,754.6 L1126.0,755.8 L1126.2,754.5 L1126.5,751.7 L1126.7,752.8 L1127.0,754.5 L1127.2,751.8 L1127.5,757.9 L1127.7,753.7 L1127.9,750.6 L1128.2,751.6 L1128.4,757.5 L1128.7,755.3 L1128.9,758.6 L1129.2,755.6 L1129.4,755.2 L1129.6,757.6 L1129.9,757.7 L1130.1,753.3 L1130.4,754.8 L1130.6,759.8 L1130.9,754.5 L1131.1,752.0 L1131.4,753.8 L1131.6,756.4 L1131.8,750.4 L1132.1,749.6 L1132.3,757.0 L1132.6,757.0 L1132.8,751.4 L1133.1,753.2 L1133.3,756.2 L1133.6,754.4 L1133.8,754.2 L1134.0,753.3 L1134.3,752.2 L1134.5,759.3 L1134.8,749.9 L1135.0,758.6 L1135.3,756.5 L1135.5,757.8 L1135.8,757.3 L1136.0,760.3 L1136.2,753.8 L1136.5,754.9 L1136.7,758.4 L1137.0,751.0 L1137.2,753.1 L1137.5,761.5 L1137.7,752.4 L1138.0,753.5 L1138.2,761.6 L1138.4,753.4 L1138.7,755.9 L1138.9,761.6 L1139.2,757.5 L1139.4,752.1 L1139.7,758.6 L1139.9,762.3 L1140.2,754.7 L1140.4,758.2 L1140.6,758.0 L1140.9,754.4 L1141.1,755.4 L1141.4,756.3 L1141.6,757.0 L1141.9,758.2 L1142.1,757.7 L1142.4,749.0 L1142.6,754.5 L1142.8,752.5 L1143.1,751.3 L1143.3,744.4 L1143.6,753.9 L1143.8,751.2 L1144.1,754.2 L1144.3,758.2 L1144.6,752.3 L1144.8,764.7 L1145.0,758.6 L1145.3,751.7 L1145.5,757.7 L1145.8,756.7 L1146.0,755.9 L1146.3,757.7 L1146.5,756.7 L1146.8,763.3 L1147.0,755.1 L1147.2,753.0 L1147.5,753.4 L1147.7,754.3 L1148.0,756.0 L1148.2,754.0 L1148.5,756.3 L1148.7,757.8 L1148.9,755.8 L1149.2,753.6 L1149.4,761.6 L1149.7,752.5 L1149.9,754.8 L1150.2,753.2 L1150.4,755.0 L1150.7,757.2 L1150.9,750.3 L1151.1,746.9 L1151.4,751.0 L1151.6,751.7 L1151.9,751.0 L1152.1,761.3 L1152.4,752.0 L1152.6,749.6 L1152.9,756.6 L1153.1,748.4 L1153.3,753.0 L1153.6,752.4 L1153.8,753.7 L1154.1,753.7 L1154.3,754.5 L1154.6,758.7 L1154.8,755.5 L1155.1,751.8 L1155.3,757.1 L1155.5,754.6 L1155.8,752.6 L1156.0,749.3 L1156.3,751.9 L1156.5,753.1 L1156.8,748.0 L1157.0,757.8 L1157.3,753.0 L1157.5,749.1 L1157.7,751.4 L1158.0,751.6 L1158.2,744.0 L1158.5,753.8 L1158.7,751.9 L1159.0,749.5 L1159.2,749.6 L1159.5,751.4 L1159.7,746.3 L1159.9,746.2 L1160.2,740.4 L1160.4,745.1 L1160.7,744.1 L1160.9,746.6 L1161.2,743.0 L1161.4,742.0 L1161.7,748.9 L1161.9,742.3 L1162.1,740.6 L1162.4,744.0 L1162.6,741.5 L1162.9,739.5 L1163.1,741.6 L1163.4,741.7 L1163.6,744.2 L1163.9,741.9 L1164.1,739.9 L1164.3,746.1 L1164.6,746.8 L1164.8,736.9 L1165.1,741.9 L1165.3,740.1 L1165.6,735.9 L1165.8,744.5 L1166.1,745.0 L1166.3,746.7 L1166.5,743.7 L1166.8,743.4 L1167.0,744.6 L1167.3,747.9 L1167.5,746.1 L1167.8,742.9 L1168.0,745.8 L1168.2,745.5 L1168.5,748.7 L1168.7,752.8 L1169.0,745.5 L1169.2,748.1 L1169.5,758.1 L1169.7,747.6 L1170.0,745.5 L1170.2,757.6 L1170.4,752.8 L1170.7,759.1 L1170.9,756.7 L1171.2,754.1 L1171.4,757.6 L1171.7,755.9 L1171.9,758.7 L1172.2,757.1 L1172.4,760.3 L1172.6,758.8 L1172.9,756.2 L1173.1,648.7 L1173.4,762.1 L1173.6,764.8 L1173.9,762.4 L1174.1,759.3 L1174.4,759.2 L1174.6,760.7 L1174.8,758.3 L1175.1,759.9 L1175.3,764.1 L1175.6,761.1 L1175.8,766.7 L1176.1,761.1 L1176.3,757.6 L1176.6,758.4 L1176.8,760.8 L1177.0,759.0 L1177.3,760.0 L1177.5,753.8 L1177.8,762.3 L1178.0,761.0 L1178.3,745.1 L1178.5,760.1 L1178.8,754.8 L1179.0,756.5 L1179.2,754.3 L1179.5,756.6 L1179.7,756.4 L1180.0,756.6 L1180.2,754.3 L1180.5,757.0 L1180.7,757.3 L1181.0,758.3 L1181.2,754.0 L1181.4,753.3 L1181.7,757.8 L1181.9,757.0 L1182.2,757.5" fill="none" stroke="#0000ff" stroke-width="1.6" stroke-linejoin="round"/></g>
<rect x="1108.7" y="691.6" width="72.9" height="16.5" rx="2.5" fill="#fff" fill-opacity="0.8" stroke="#cccccc" stroke-width="1"/>
<line x1="1111.0" y1="699.9" x2="1133.8" y2="699.9" stroke="#0000ff" stroke-width="1.5"/>
<text x="1137.40" y="703.00" font-size="10.7" text-anchor="start" fill="#000" textLength="39.60" lengthAdjust="spacingAndGlyphs" >x=1024</text>
<rect x="911.0" y="688.8" width="274.0" height="119.90000000000009" fill="none" stroke="#000" stroke-width="1.6"/>
<line x1="913.20" y1="808.7" x2="913.20" y2="815.5" stroke="#000" stroke-width="1.4"/>
<text x="913.20" y="832.00" font-size="10.7" text-anchor="middle" fill="#000" >0</text>
<line x1="962.06" y1="808.7" x2="962.06" y2="815.5" stroke="#000" stroke-width="1.4"/>
<text x="962.06" y="832.00" font-size="10.7" text-anchor="middle" fill="#000" >200</text>
<line x1="1010.92" y1="808.7" x2="1010.92" y2="815.5" stroke="#000" stroke-width="1.4"/>
<text x="1010.92" y="832.00" font-size="10.7" text-anchor="middle" fill="#000" >400</text>
<line x1="1059.78" y1="808.7" x2="1059.78" y2="815.5" stroke="#000" stroke-width="1.4"/>
<text x="1059.78" y="832.00" font-size="10.7" text-anchor="middle" fill="#000" >600</text>
<line x1="1108.64" y1="808.7" x2="1108.64" y2="815.5" stroke="#000" stroke-width="1.4"/>
<text x="1108.64" y="832.00" font-size="10.7" text-anchor="middle" fill="#000" >800</text>
<line x1="1157.50" y1="808.7" x2="1157.50" y2="815.5" stroke="#000" stroke-width="1.4"/>
<text x="1157.50" y="832.00" font-size="10.7" text-anchor="middle" fill="#000" >1000</text>
<line x1="904.2" y1="783.70" x2="911.0" y2="783.70" stroke="#000" stroke-width="1.4"/>
<text x="896.00" y="787.55" font-size="10.7" text-anchor="end" fill="#000" >0</text>
<line x1="904.2" y1="738.70" x2="911.0" y2="738.70" stroke="#000" stroke-width="1.4"/>
<text x="896.00" y="742.55" font-size="10.7" text-anchor="end" fill="#000" >200</text>
<line x1="904.2" y1="693.70" x2="911.0" y2="693.70" stroke="#000" stroke-width="1.4"/>
<text x="896.00" y="697.55" font-size="10.7" text-anchor="end" fill="#000" >400</text>
<text x="1048.00" y="850.00" font-size="10.7" text-anchor="middle" fill="#000" >Y</text>
<text x="866.80" y="749.50" font-size="10.7" text-anchor="middle" fill="#000" textLength="33.40" lengthAdjust="spacingAndGlyphs" transform="rotate(-90 866.80 749.50)" >counts</text>
<text x="1193.40" y="749.50" font-size="10.7" text-anchor="middle" fill="#000" textLength="38.90" lengthAdjust="spacingAndGlyphs" transform="rotate(90 1193.40 749.50)" >cut in y</text>
</svg></body></html>
